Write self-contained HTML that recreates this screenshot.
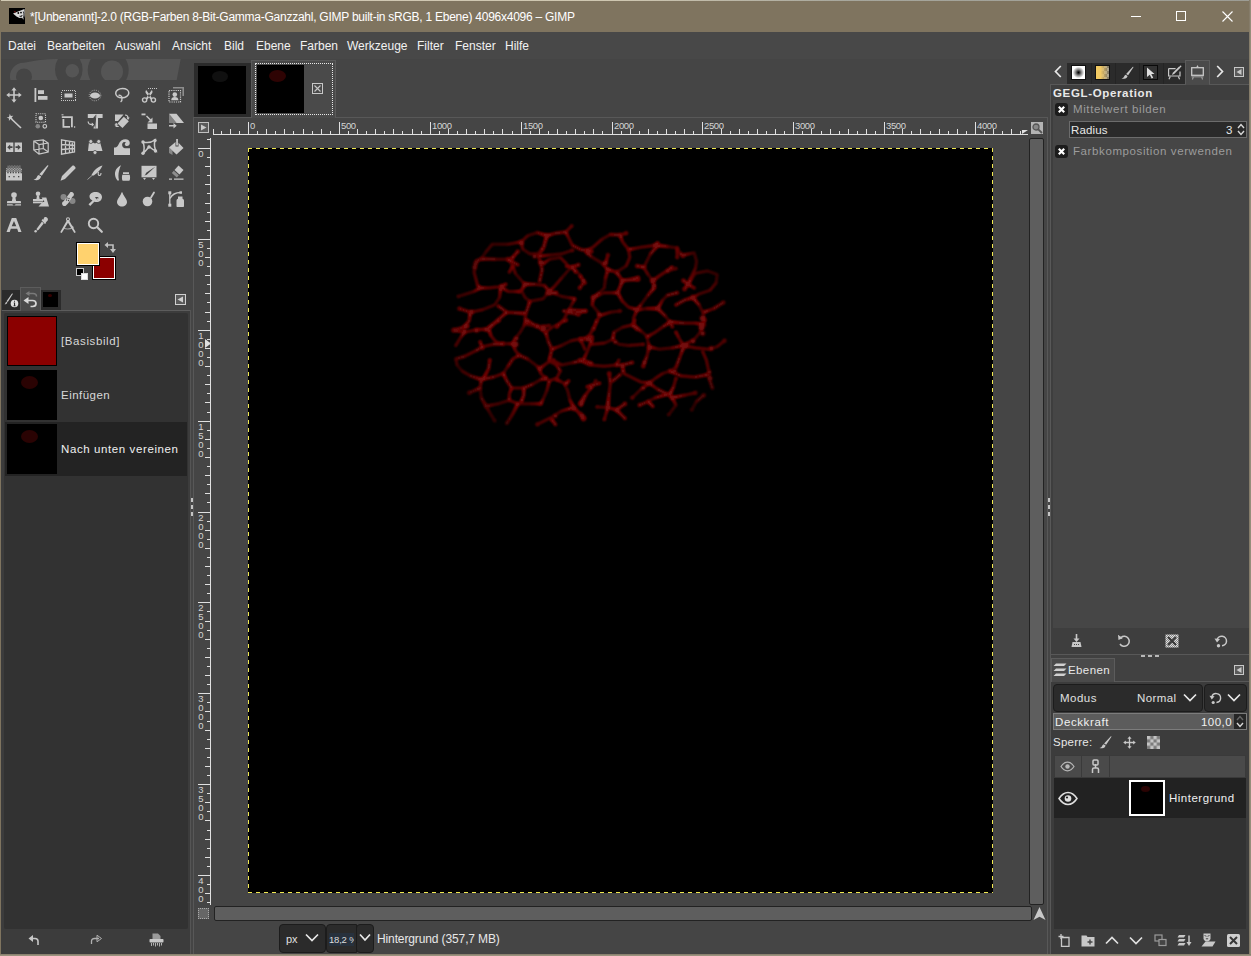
<!DOCTYPE html>
<html>
<head>
<meta charset="utf-8">
<title>GIMP</title>
<style>
*{box-sizing:border-box;margin:0;padding:0}
html,body{width:1251px;height:956px;overflow:hidden;background:#454545;font-family:"Liberation Sans",sans-serif;color:#e0e0e0;font-size:12px}
.abs{position:absolute}
#win{position:absolute;left:0;top:0;width:1251px;height:956px;background:#454545;overflow:hidden}
#title{position:absolute;left:0;top:0;width:1251px;height:32px;background:#7f745f}
#title:before{content:"";position:absolute;left:0;top:0;width:1251px;height:1px;background:linear-gradient(90deg,#d2cab4 0,#cec6b0 50%,#a6a69c 68%,#9c9c94 100%)}
#title .t{position:absolute;left:30px;top:10px;font-size:12px;color:#fff;white-space:nowrap;letter-spacing:-.25px}
#bl{position:absolute;left:0;top:0;width:1px;height:956px;background:#7f745f}
#br{position:absolute;left:1249px;top:0;width:2px;height:956px;background:#857c6a;border-right:1px solid #968e7b}
#bb{position:absolute;left:0;top:954px;width:1251px;height:2px;background:#8a8270;border-bottom:1px solid #9a927e}
#menu span{position:absolute;top:39px;font-size:12px;color:#f2f2f2;white-space:nowrap}
.txt{position:absolute;white-space:nowrap}
.ui{font-size:11.5px;letter-spacing:.6px}
.rt{position:absolute;font-size:9.500px;letter-spacing:-.4px;color:#d4d4d4;line-height:10px;white-space:nowrap}
.vrt{position:absolute;font-size:9.500px;color:#d4d4d4;line-height:9.100px;width:6px;text-align:center}
.dis{color:#9c9c9c}
.cb{width:13px;height:13px;background:#1c1c1c;border-radius:3px}
.ic{position:absolute;width:16px;height:16px;fill:#c8c8c8;stroke:none;overflow:visible}
.ic .s{fill:none;stroke:#c8c8c8}
</style>
</head>
<body>
<div id="win">
<!-- TITLE -->
<div id="title"><svg class="abs" style="left:9px;top:8px" width="16" height="16" viewBox="0 0 16 16"><rect width="16" height="16" fill="#000"/><path d="M4 5.500L9 3.500 15.500 1 15.800 7 14.500 11.500 12.500 9.800 10.500 10 7.500 8.500z" fill="#d8d8d8"/><path d="M4.500 2.800l2.500.5-1 2z" fill="#5a1010"/><circle cx="9.300" cy="5" r=".9" fill="#000"/><circle cx="12" cy="4.600" r=".9" fill="#000"/><path d="M10.500 8.200l2 .2.600-1.400" stroke="#000" stroke-width=".9" fill="none"/><path d="M14.300 3.500c1 2 1 5-.5 7.500" stroke="#000" stroke-width=".8" fill="none"/></svg><span class="t">*[Unbenannt]-2.0 (RGB-Farben 8-Bit-Gamma-Ganzzahl, GIMP built-in sRGB, 1 Ebene) 4096x4096 – GIMP</span><svg class="abs" style="left:1125px;top:5px" width="115" height="22" viewBox="1125 5 115 22"><path d="M1131 16.500h10" stroke="#fff" stroke-width="1"/><rect x="1176.500" y="11.500" width="9" height="9" fill="none" stroke="#fff" stroke-width="1"/><path d="M1222.500 11.500l10 10M1232.500 11.500l-10 10" stroke="#fff" stroke-width="1.100"/></svg></div>
<!-- MENU -->
<div class="abs" style="left:1px;top:32px;width:1248px;height:27px;background:#484848"></div>
<div id="menu">
<span style="left:8px">Datei</span><span style="left:47px">Bearbeiten</span><span style="left:115px">Auswahl</span><span style="left:172px">Ansicht</span><span style="left:224px">Bild</span><span style="left:256px">Ebene</span><span style="left:300px">Farben</span><span style="left:347px">Werkzeuge</span><span style="left:417px">Filter</span><span style="left:455px">Fenster</span><span style="left:505px">Hilfe</span>
</div>
<div id="toolbox">
<!-- wilber strip -->
<svg class="abs" style="left:0;top:59px" width="190" height="21" viewBox="0 59 190 21">
<path d="M10.400 80A13.600 13.600 0 0 1 24 62.800C35 60.500 45 59 56 59L180.700 59 176.700 80z" fill="#555"/>
<circle cx="24" cy="76.400" r="8" fill="#454545"/>
<ellipse cx="68.800" cy="69.500" rx="13.800" ry="17" fill="#454545"/>
<circle cx="72.300" cy="70.800" r="6.800" fill="#555"/>
<circle cx="108.200" cy="70" r="20.500" fill="#454545"/>
<circle cx="112" cy="71.500" r="11" fill="#555"/>
</svg>
<!-- Row 1 -->
<svg class="ic" style="left:6px;top:87px" viewBox="0 0 16 16"><path d="M8 .3l2.6 3.2H8.8v3.7h3.7V5.4L15.7 8l-3.2 2.6V8.8H8.8v3.7h1.8L8 15.7l-2.6-3.2h1.8V8.8H3.500v1.800L.300 8l3.200-2.600v1.800h3.700V3.500H5.400z"/></svg>
<svg class="ic" style="left:33px;top:87px" viewBox="0 0 16 16"><rect x="1.500" y="1" width="1.800" height="14"/><rect x="5" y="3.200" width="6" height="3.800"/><rect x="5" y="9" width="9.500" height="3.800"/></svg>
<svg class="ic" style="left:60px;top:87px" viewBox="0 0 16 16"><rect class="s" x="1.500" y="3.500" width="14" height="10" stroke-width="1" stroke-dasharray="1 1" shape-rendering="crispEdges"/><rect x="4.500" y="6.500" width="8" height="4"/></svg>
<svg class="ic" style="left:87px;top:87px" viewBox="0 0 16 16"><ellipse class="s" cx="8" cy="8.500" rx="5.800" ry="5.300" stroke-width="1" stroke-dasharray="1 1.200" opacity=".75"/><ellipse cx="8" cy="8.500" rx="5" ry="3"/></svg>
<svg class="ic" style="left:114px;top:87px" viewBox="0 0 16 16"><path class="s" stroke-width="1.500" d="M8.500 1.500c3.800 0 6.300 2 6.300 4.500s-3 4.700-6.800 4.700c-3.500 0-6.300-1.700-6.300-4.400 0-2.700 3-4.800 6.800-4.800z"/><path class="s" stroke-width="1.400" d="M4.500 8.500c1.800-.6 3.300.5 3.500 2.200.2 1.600.3 3.200-1.400 4.300"/></svg>
<svg class="ic" style="left:141px;top:87px" viewBox="0 0 16 16"><path class="s" stroke-width="1" stroke-dasharray="1 1" shape-rendering="crispEdges" d="M7 1.500h9"/><circle class="s" cx="3.600" cy="13" r="2.100" stroke-width="1.400"/><circle class="s" cx="12.400" cy="13" r="2.100" stroke-width="1.400"/><path d="M4.700 11.500L10.800 3c.8 1 .9 2.200.3 3.200L6.400 12.400zM11.300 11.500L5.200 3c-.8 1-.9 2.200-.3 3.200l4.700 6.200z"/></svg>
<svg class="ic" style="left:168px;top:87px" viewBox="0 0 16 16"><path d="M5 0h11v9h-1.600V1.600H5z" opacity=".55"/><rect class="s" x="1" y="3.500" width="11.500" height="11.500" stroke-width="1.200" stroke-dasharray="1.200 1"/><circle cx="6.800" cy="7.600" r="2.300"/><path d="M3.200 13.300c0-2.400 1.400-3.300 3.600-3.300s3.600.9 3.600 3.300z"/></svg>
<!-- Row 2 -->
<svg class="ic" style="left:6px;top:113px" viewBox="0 0 16 16"><path d="M3.800.8l1 2.300 2.500-.4-1.600 1.900 1.300 2.200-2.400-.8L2.900 8l.1-2.500L.6 4.600l2.400-.7z"/><path class="s" stroke-width="1.700" d="M5.500 6l9.500 9"/></svg>
<svg class="ic" style="left:33px;top:113px" viewBox="0 0 16 16"><rect class="s" x="3" y=".8" width="9.500" height="8.400" stroke-width="1.100" stroke-dasharray="1.100 1"/><circle cx="7.800" cy="5" r="2.300"/><circle cx="4.800" cy="13.300" r="2.300" opacity=".5"/><circle class="s" cx="11.800" cy="13.300" r="1.800" stroke-width="1.200"/></svg>
<svg class="ic" style="left:60px;top:113px" viewBox="0 0 16 16"><path d="M1.500 1h2v1.500h-2zM14 13h1.200v2H14z" opacity=".7"/><path d="M1.800 3.200h11v11h-1.800V5H1.800z"/><path d="M2.500 6h1.800v7H10v1.800H2.500z"/></svg>
<svg class="ic" style="left:87px;top:113px" viewBox="0 0 16 16"><path d="M.8 1h14.800v4H11v10.500H6.500L9 1.500 6.200 5H.8z"/><path class="s" stroke-width="1.300" d="M1.200 8.500c0 2.500 1 3 4.300 3"/><path d="M4.800 9.500l2.500 2-2.500 2z"/><path d="M9.400 1l-2.900 9.500 1.800 5z" fill="#454545"/></svg>
<svg class="ic" style="left:114px;top:113px" viewBox="0 0 16 16"><path d="M1 1.500h8.500L4 8H1z"/><path d="M3.500 10.500l6.300-6.800 5 4.600-6.300 6.800z"/><path class="s" stroke-width="1.200" d="M11 2c2 0 3 1 3 3"/><path d="M12.500 4.500h3.200L14 7z"/><path class="s" stroke-width="1.200" d="M2.200 10v3.500h2.500M.8 11.800h3"/></svg>
<svg class="ic" style="left:141px;top:113px" viewBox="0 0 16 16"><rect x=".5" y=".5" width="4" height="1.800"/><path class="s" stroke-width="1.400" d="M5.500 3l5 5"/><path d="M11.500 4.500v5h-5z"/><rect x="6.500" y="10.500" width="9.500" height="5.500"/></svg>
<svg class="ic" style="left:168px;top:113px" viewBox="0 0 16 16"><path d="M1 .8h7.500L16 10H8.500z"/><path d="M1 .8L8.500 10H1z" opacity=".45"/><path d="M1 12h4.500v-2l3.200 2.800-3.200 2.800v-2H1z"/></svg>
<!-- Row 3 -->
<svg class="ic" style="left:6px;top:139px" viewBox="0 0 16 16"><path d="M0 3.500h7.300v9.500H0zM8.700 3.500H16v9.500H8.700z"/><path fill="#454545" d="M1.200 8.200l3-2.700v1.800h2.300v1.800H4.200v1.800zM14.800 8.200l-3-2.700v1.800H9.500v1.800h2.300v1.800z"/></svg>
<svg class="ic" style="left:33px;top:139px" viewBox="0 0 16 16"><path class="s" stroke-width="1.200" d="M.8 2l9.500-1.200L15.200 4v9L6 15.200.8 11zM.8 2L6 5.500l9.200-1.500M6 5.500v9.700M10.300.8v8.700l4.900 3.500M10.300 9.500L.8 11"/></svg>
<svg class="ic" style="left:60px;top:139px" viewBox="0 0 16 16"><path class="s" stroke-width="1.300" d="M1.500.8L14.500 3v10L1.500 15.200zM5.500 1.500v13M9.500 2.200v11.600M12.300 2.700v10.600M1.500 5.500l13 1M1.500 10.500l13-1"/></svg>
<svg class="ic" style="left:87px;top:139px" viewBox="0 0 16 16"><path d="M2 3h3l3 1.500L11 3h2l2.500 9H10l-2 1.500L6 12H1z"/><circle cx="3.800" cy="2.500" r="2" stroke="#454545" stroke-width=".8"/><circle cx="11.700" cy="2.500" r="2" stroke="#454545" stroke-width=".8"/><circle cx="8" cy="13.500" r="2" stroke="#454545" stroke-width=".8"/></svg>
<svg class="ic" style="left:114px;top:139px" viewBox="0 0 16 16"><path d="M0 16V8.500c2 0 3.500-.5 4.500-3C5.800 2 8.500.3 11.500.3c2.500 0 4.300 1.500 4.300 3.800 0 2-1.300 3-2.800 3-1.300 0-2.200-.8-2.200-1.900 0-.9.600-1.500 1.400-1.500-.4-.6-1-.8-1.700-.8-1.800 0-2.800 2-2.200 4 .5 1.500 1.800 2.300 3.700 2.300h4V16z"/></svg>
<svg class="ic" style="left:141px;top:139px" viewBox="0 0 16 16"><path class="s" stroke-width="1.500" d="M2 3c3.500 1 8.500.5 12-2-1 4-.5 8 1 11-2.500-1-4.500-2.300-7-4.500C6.500 10 4.500 12 2 14.500 3.500 11 3.500 7 2 3z"/><circle cx="2" cy="3" r="1.700"/><circle cx="14" cy="1.500" r="1.700"/><circle cx="14.500" cy="12" r="1.700"/><circle cx="2" cy="14.300" r="1.700"/><circle cx="8" cy="8" r="1.700"/></svg>
<svg class="ic" style="left:168px;top:139px" viewBox="0 0 16 16"><path d="M8.200 0h1.700v6.500H8.200z"/><path d="M1 8.500L7.500 3v4.500h3V3.800L15.500 9 8.500 15.500z"/><path d="M1 8.500l3.500 3.300V16L1 14z" opacity=".5"/></svg>
<!-- Row 4 -->
<svg class="ic" style="left:6px;top:165px" viewBox="0 0 16 16"><defs><pattern id="chk" width="2.660" height="2.660" patternUnits="userSpaceOnUse"><rect width="1.330" height="1.330" fill="#c8c8c8"/><rect x="1.330" y="1.330" width="1.330" height="1.330" fill="#c8c8c8"/></pattern></defs><rect x="1.300" y="0.500" width="13.400" height="3" fill="url(#chk)" opacity=".6"/><rect x="0" y="3.200" width="16" height="5" fill="url(#chk)"/><path d="M0 7h16v8.500H0z"/><g fill="#454545"><rect x="1.300" y="7" width="1.300" height="1.300"/><rect x="4" y="7" width="1.300" height="1.300"/><rect x="6.600" y="7" width="1.300" height="1.300"/><rect x="9.300" y="7" width="1.300" height="1.300"/><rect x="12" y="7" width="1.300" height="1.300"/><rect x="14.600" y="7" width="1.300" height="1.300"/><rect x="2.600" y="11" width="1.300" height="1.300"/><rect x="7.300" y="11" width="1.300" height="1.300"/><rect x="12" y="11" width="1.300" height="1.300"/></g></svg>
<svg class="ic" style="left:33px;top:165px" viewBox="0 0 16 16"><path d="M15 .3c.3 0 .5.300.3.600L8.800 10.800 6.300 9.300 14.300.600c.2-.2.400-.3.700-.3z"/><path d="M5.700 10.100l2.400 1.500c-.4 1.800-1.800 3.400-4.200 3.600-1.200.1-2.300-.2-3.400-.5 1.800-.5 2.800-1.200 3.300-2.500.3-.900 1-1.700 1.900-2.100z"/></svg>
<svg class="ic" style="left:60px;top:165px" viewBox="0 0 16 16"><path d="M12.300.8c.5-.5 1.300-.5 1.800 0l1.100 1.100c.5.500.5 1.300 0 1.800L5 13.900l-4.500 1.800L2 11z"/></svg>
<svg class="ic" style="left:87px;top:165px" viewBox="0 0 16 16"><path d="M15.500.5C11 1.500 7 5 4.500 10l1.300.8C9 9.500 13.500 5.500 15.500.5z"/><path class="s" stroke-width=".7" d="M5 10.500L.5 14.500"/><path class="s" stroke-width="1.100" d="M11.500 7c-.5 1.500-.5 3.500 1 3.500 1.200 0 1.500-1.200 1.500-2.500"/></svg>
<svg class="ic" style="left:114px;top:165px" viewBox="0 0 16 16"><path d="M7 .2C3 2 .8 5.500 1 9.500c.1 2.500 1.300 4.800 2.800 6.300l1.200-.5C4.200 12.500 4.300 9 5 6c.4-2 1.100-4 2-5.800z"/><path d="M9 7.300h6v1.800H9zM8.300 9.800h7.400c.5 1.800.5 3.800 0 5.500-.1.300-.3.500-.6.500H8.900c-.3 0-.5-.2-.6-.5-.5-1.700-.5-3.700 0-5.500z"/></svg>
<svg class="ic" style="left:141px;top:165px" viewBox="0 0 16 16"><path d="M.5.800h15v11.500H.5z"/><path fill="#454545" d="M14.500 1.500L6 9.500c-.8.800-2 .8-2.800.5 1 0 1.300-.5 1.500-1.300.1-.5.400-.9.800-1.100z"/><path d="M2 13h3l-1.500 2zM11 13h3l-1.500 2z"/></svg>
<svg class="ic" style="left:168px;top:165px" viewBox="0 0 16 16"><path d="M10.500.5L15.500 5l-4 4.500L6.500 5z"/><path d="M5.800 5.800l5 4.500-2 2.200-5-4.500z" opacity=".55"/><path d="M1 13.500h3v1.200H1zM6 13.500h9.500v1.200H6z"/></svg>
<!-- Row 5 -->
<svg class="ic" style="left:6px;top:191px" viewBox="0 0 16 16"><circle cx="8" cy="4" r="2.800"/><path d="M6.800 5.500h2.400l.9 4.500H14c.6 0 1 .4 1 1v3.500H1V11c0-.6.400-1 1-1h3.900z"/><path fill="#454545" d="M1 12.300h14v.9H1zM6.300 13.200h3.400L8 15z"/></svg>
<svg class="ic" style="left:33px;top:191px" viewBox="0 0 16 16"><circle cx="5" cy="2.800" r="2.300"/><path d="M4 4.500h2l.6 3.500H10v2.500H0V8h3.400z"/><path d="M0 11h9v1.300H0z"/><path d="M8.500 6.500h4.800L16 15.500H5.500L9.500 11h2z"/></svg>
<svg class="ic" style="left:60px;top:191px" viewBox="0 0 16 16"><circle cx="3.500" cy="6" r="3" opacity=".5"/><circle cx="12.500" cy="10" r="3" opacity=".5"/><path d="M9.500.8c1.200-.7 2.700-.3 3.400.9.700 1.200.3 2.700-.9 3.400 0 0-2.500 7-5.500 10.100-1.200.7-2.700.3-3.400-.9-.7-1.200-.3-2.700.9-3.400z" transform="rotate(8 8 8)"/><g fill="#454545"><circle cx="7" cy="7" r=".7"/><circle cx="9" cy="7.500" r=".7"/><circle cx="6.500" cy="9" r=".7"/><circle cx="8.500" cy="9.500" r=".7"/></g></svg>
<svg class="ic" style="left:87px;top:191px" viewBox="0 0 16 16"><path d="M8.500 1C12 1 15 3 15 6s-2.500 5-5.500 5c-.8 0-1.500-.1-2.200-.3L3.200 15 1.500 13.300 5.500 9.500C3.800 8.800 2.500 7.500 2.500 5.500 2.500 3 5 1 8.500 1z"/><path fill="#454545" d="M8 6.500c1.500-.8 3.300-.3 4 1-1-.5-2-.3-2.800.4.800.3 1.300 1 1.300 2C10 8.500 9 7.500 8 6.500z"/></svg>
<svg class="ic" style="left:114px;top:191px" viewBox="0 0 16 16"><path d="M8 1c.3 0 .6 1.500 2.300 4.300C12 8 13 9.300 13 11c0 2.500-2.200 4.500-5 4.500S3 13.500 3 11c0-1.700 1-3 2.700-5.700C7.400 2.500 7.700 1 8 1z"/></svg>
<svg class="ic" style="left:141px;top:191px" viewBox="0 0 16 16"><circle cx="6.500" cy="10.500" r="4.800"/><path class="s" stroke-width="1.800" stroke-linecap="round" d="M10 6.500L13 1.500"/></svg>
<svg class="ic" style="left:168px;top:191px" viewBox="0 0 16 16"><path class="s" stroke-width="1.300" d="M1.800 2v12"/><rect x=".3" y=".3" width="3" height="3"/><rect x=".3" y="12.700" width="3" height="3"/><path class="s" stroke-width="1.300" d="M2 7.500C4 3.500 8 1.500 12.500 1.500"/><rect x="11.500" y=".3" width="2.500" height="2.500"/><path d="M10 5.500h4.500v2.300c.9.300 1.500 1 1.500 2V15c0 .6-.4 1-1 1h-5.500c-.6 0-1-.4-1-1V9.800c0-1 .6-1.700 1.500-2z"/></svg>
<!-- Row 6 -->
<svg class="ic" style="left:6px;top:217px" viewBox="0 0 16 16"><path d="M5.800 1h4.400L15.500 15h-3.200l-1.100-3.200H4.800L3.700 15H.5zM8 4L5.700 9.300h4.600z"/></svg>
<svg class="ic" style="left:33px;top:217px" viewBox="0 0 16 16"><path d="M11.200.6c1-.8 2.400-.6 3.200.3.800 1 .7 2.300-.2 3.200l-1.500 1.300.5.600-1.300 1.100-3.400-3.900 1.300-1.100.5.600z"/><path d="M9 4.600l1.700 2-5.200 6.300-1.900.6.300-2z"/><circle cx="2.600" cy="14.300" r="1.200"/></svg>
<svg class="ic" style="left:60px;top:217px" viewBox="0 0 16 16"><circle class="s" cx="8" cy="2.200" r="1.500" stroke-width="1.100"/><path d="M7 3.300h2L15.800 15.300l-1.500.7L8 5.800 1.700 16 .2 15.300z"/><path class="s" stroke-width="1.100" d="M3.200 10.800c3 1.600 6.500 1.600 9.600-.2" opacity=".75"/><path d="M11.300 7.700l2.700 2.600-1.200 1z" opacity=".8"/></svg>
<svg class="ic" style="left:87px;top:217px" viewBox="0 0 16 16"><circle class="s" cx="6.500" cy="6.500" r="4.700" stroke-width="1.900"/><path class="s" stroke-width="2.200" stroke-linecap="round" d="M10.300 10.300l4.500 4.500"/></svg>
<!-- fg/bg -->
<div class="abs" style="left:93px;top:257px;width:22px;height:22px;background:#8b0000;border:1px solid #fff;outline:1px solid #000"></div>
<div class="abs" style="left:77px;top:243px;width:22px;height:22px;background:#ffd26e;border:1px solid #fff;outline:1px solid #000"></div>
<svg class="abs" style="left:104px;top:241px" width="13" height="13" viewBox="0 0 13 13"><path d="M3 4h6v5" fill="none" stroke="#c0c0c0" stroke-width="1.600"/><path d="M4 1L.5 4 4 7zM6 8h6L9 12z" fill="#c0c0c0"/></svg>
<div class="abs" style="left:76px;top:268px;width:8px;height:8px;background:#000;border:1px solid #ccc"></div>
<div class="abs" style="left:81px;top:273px;width:7px;height:7px;background:#fff;border:1px solid #ddd"></div>
</div>
<div id="leftdock">
<!-- tabs -->
<div class="abs" style="left:2px;top:290px;width:59px;height:21px;background:#2b2b2b"></div>
<div class="abs" style="left:20px;top:287px;width:21px;height:25px;background:#4a4a4a;border:1px solid #5c5c5c;border-bottom:none"></div>
<svg class="abs" style="left:4px;top:293px" width="15" height="15" viewBox="0 0 15 15"><path d="M8.500.5c.3 0 .5.300.3.600L3.800 9 2.500 8.300 7.800.800c.2-.2.400-.3.700-.3z" fill="#c8c8c8"/><path d="M2.200 8.800l1.200.7c-.3 1-1.200 1.800-2.900 1.800.8-.5 1-1 1.100-1.500.1-.4.300-.8.600-1z" fill="#c8c8c8"/><circle cx="10.500" cy="10.500" r="3.800" fill="#e0e0e0"/><path d="M10 7.800h1v1h-1zM9.700 9.500h1.400v3h.6v.7H9.400v-.7h.6V10.200h-.3z" fill="#2b2b2b"/></svg>
<svg class="abs" style="left:23px;top:291px" width="16" height="17" viewBox="0 0 16 17"><path d="M4.500 2.500H10c2.200 0 3.500 1.300 3.500 3" fill="none" stroke="#7a7a7a" stroke-width="1.500"/><path d="M6.500 0L2.500 2.500l4 2.500z" fill="#7a7a7a"/><path d="M3 9.500h6.500c2.200 0 3.500 1.200 3.500 3s-1.300 3-3.500 3H7.500" fill="none" stroke="#d8d8d8" stroke-width="1.700"/><path d="M5.500 6L.5 9.500l5 3.500z" fill="#d8d8d8"/></svg>
<div class="abs" style="left:43px;top:292px;width:15px;height:15px;background:#000"></div>
<div class="abs" style="left:48px;top:294px;width:4px;height:3px;border-radius:50%;background:#380000"></div>
<svg class="abs" style="left:175px;top:294px" width="11" height="11" viewBox="0 0 11 11"><rect x=".5" y=".5" width="10" height="10" fill="#5a5a5a" stroke="#d0d0d0"/><path d="M8 2.500L2.500 5.500 8 8.500z" fill="#d0d0d0"/></svg>
<!-- frame -->
<div class="abs" style="left:2px;top:310px;width:189px;height:1px;background:#5c5c5c"></div>
<div class="abs" style="left:21px;top:310px;width:19px;height:1px;background:#4a4a4a"></div>
<!-- list -->
<div class="abs" style="left:1px;top:311px;width:189px;height:643px;background:#3c3c3c"></div>
<div class="abs" style="left:4px;top:313px;width:184px;height:616px;background:#323232;border-radius:2px"></div>
<div class="abs" style="left:5px;top:422px;width:182px;height:54px;background:#232323"></div>
<div class="abs" style="left:7px;top:316px;width:50px;height:50px;background:#8b0000;border:1px solid #000"></div>
<div class="abs" style="left:7px;top:370px;width:50px;height:50px;background:#000"></div>
<div class="abs" style="left:21px;top:376px;width:17px;height:13px;border-radius:50%;background:#2a0303"></div>
<div class="abs" style="left:7px;top:424px;width:50px;height:50px;background:#000"></div>
<div class="abs" style="left:21px;top:430px;width:17px;height:13px;border-radius:50%;background:#2a0303"></div>
<div class="txt ui" style="left:61px;top:335px;color:#d8d8d8" id="u1">[Basisbild]</div>
<div class="txt ui" style="left:61px;top:389px;color:#d8d8d8;letter-spacing:.48px" id="u2">Einfügen</div>
<div class="txt ui" style="left:61px;top:443px;color:#f0f0f0" id="u3">Nach unten vereinen</div>
<!-- bottom buttons -->
<svg class="abs" style="left:28px;top:934px" width="12" height="12" viewBox="0 0 12 12"><path d="M2.500 4.500H7c2 0 3 1 3 2.700V11" fill="none" stroke="#c8c8c8" stroke-width="1.600"/><path d="M5 1L.5 4.500 5 8z" fill="#c8c8c8"/></svg>
<svg class="abs" style="left:89px;top:934px" width="13" height="12" viewBox="0 0 13 12"><path d="M10 4.500H5.500c-2 0-3 1-3 2.700V10" fill="none" stroke="#b0b0b0" stroke-width="1.300"/><path d="M8 1.200l4.500 3.300L8 7.800z" fill="none" stroke="#b0b0b0" stroke-width="1"/></svg>
<svg class="abs" style="left:149px;top:933px" width="15" height="14" viewBox="0 0 15 14"><path d="M3.500.5h5.500l2.500 2.500V6H3.500z" fill="#9a9a9a"/><rect x=".5" y="6" width="14" height="3.500" rx=".8" fill="#c8c8c8"/><path d="M2.500 10v3M4.500 10v2.500M6.500 10v3.500M8.500 10v2.500M10.500 10v3.500M12.500 10v2.500" stroke="#b0b0b0" stroke-width="1"/></svg>
</div>
<div id="center">
<div class="abs" style="left:190px;top:310px;width:1px;height:644px;background:#555"></div>
<div class="abs" style="left:193px;top:117px;width:1px;height:837px;background:#585858"></div>
<div class="abs" style="left:191px;top:498px;width:2px;height:18px;background-image:repeating-linear-gradient(#c4c4c4 0 4px,transparent 4px 7px)"></div>
<div class="abs" style="left:194px;top:63px;width:57px;height:54px;background:#2b2b2b"></div>
<div class="abs" style="left:198px;top:66px;width:48px;height:48px;background:#000"></div>
<div class="abs" style="left:212px;top:71px;width:16px;height:11px;border-radius:50%;background:#101010"></div>
<div class="abs" style="left:251px;top:60px;width:85px;height:58px;background:#4a4a4a;border:1px solid #5a5a5a;border-bottom:none"></div>
<div class="abs" style="left:257px;top:65px;width:47px;height:48px;background:#000"></div>
<div class="abs" style="left:269px;top:70px;width:17px;height:12px;border-radius:50%;background:#2e0303"></div>
<div class="abs" style="left:255px;top:63px;width:78px;height:52px;border:1px dotted #e8e8e8"></div>
<svg class="abs" style="left:312px;top:83px" width="11" height="11" viewBox="0 0 11 11"><rect x=".5" y=".5" width="10" height="10" fill="none" stroke="#c8c8c8"/><path d="M2.500 2.500l6 6M8.500 2.500l-6 6" stroke="#c8c8c8" stroke-width="1.100"/></svg>
<div class="abs" style="left:194px;top:117px;width:57px;height:1px;background:#585858"></div>
<div class="abs" style="left:336px;top:117px;width:712px;height:1px;background:#585858"></div>
<div class="abs" style="left:1047px;top:117px;width:1px;height:837px;background:#585858"></div>
<div class="abs" style="left:1050px;top:84px;width:1px;height:870px;background:#585858"></div>
<div class="abs" style="left:1048px;top:498px;width:2px;height:18px;background-image:repeating-linear-gradient(#c4c4c4 0 4px,transparent 4px 7px)"></div>
<svg class="abs" style="left:198px;top:122px" width="11" height="11" viewBox="0 0 11 11"><rect x=".5" y=".5" width="10" height="10" fill="#5a5a5a" stroke="#c0c0c0"/><path d="M3 2.500L8.500 5.500 3 8.500z" fill="#c8c8c8"/></svg>
<svg class="abs" style="left:213px;top:119px" width="818" height="17" viewBox="0 0 818 17" shape-rendering="crispEdges"><rect x="1" y="15" width="814" height="1" fill="#e0e0e0"/><rect x="8" y="12" width="1" height="3" fill="#e0e0e0"/><rect x="17" y="10" width="1" height="5" fill="#e0e0e0"/><rect x="26" y="12" width="1" height="3" fill="#e0e0e0"/><rect x="35" y="3" width="1" height="12" fill="#e0e0e0"/><rect x="44" y="12" width="1" height="3" fill="#e0e0e0"/><rect x="53" y="10" width="1" height="5" fill="#e0e0e0"/><rect x="62" y="12" width="1" height="3" fill="#e0e0e0"/><rect x="71" y="10" width="1" height="5" fill="#e0e0e0"/><rect x="80" y="12" width="1" height="3" fill="#e0e0e0"/><rect x="90" y="10" width="1" height="5" fill="#e0e0e0"/><rect x="99" y="12" width="1" height="3" fill="#e0e0e0"/><rect x="108" y="10" width="1" height="5" fill="#e0e0e0"/><rect x="117" y="12" width="1" height="3" fill="#e0e0e0"/><rect x="126" y="3" width="1" height="12" fill="#e0e0e0"/><rect x="135" y="12" width="1" height="3" fill="#e0e0e0"/><rect x="144" y="10" width="1" height="5" fill="#e0e0e0"/><rect x="153" y="12" width="1" height="3" fill="#e0e0e0"/><rect x="162" y="10" width="1" height="5" fill="#e0e0e0"/><rect x="171" y="12" width="1" height="3" fill="#e0e0e0"/><rect x="180" y="10" width="1" height="5" fill="#e0e0e0"/><rect x="189" y="12" width="1" height="3" fill="#e0e0e0"/><rect x="199" y="10" width="1" height="5" fill="#e0e0e0"/><rect x="208" y="12" width="1" height="3" fill="#e0e0e0"/><rect x="217" y="3" width="1" height="12" fill="#e0e0e0"/><rect x="226" y="12" width="1" height="3" fill="#e0e0e0"/><rect x="235" y="10" width="1" height="5" fill="#e0e0e0"/><rect x="244" y="12" width="1" height="3" fill="#e0e0e0"/><rect x="253" y="10" width="1" height="5" fill="#e0e0e0"/><rect x="262" y="12" width="1" height="3" fill="#e0e0e0"/><rect x="271" y="10" width="1" height="5" fill="#e0e0e0"/><rect x="280" y="12" width="1" height="3" fill="#e0e0e0"/><rect x="289" y="10" width="1" height="5" fill="#e0e0e0"/><rect x="299" y="12" width="1" height="3" fill="#e0e0e0"/><rect x="308" y="3" width="1" height="12" fill="#e0e0e0"/><rect x="317" y="12" width="1" height="3" fill="#e0e0e0"/><rect x="326" y="10" width="1" height="5" fill="#e0e0e0"/><rect x="335" y="12" width="1" height="3" fill="#e0e0e0"/><rect x="344" y="10" width="1" height="5" fill="#e0e0e0"/><rect x="353" y="12" width="1" height="3" fill="#e0e0e0"/><rect x="362" y="10" width="1" height="5" fill="#e0e0e0"/><rect x="371" y="12" width="1" height="3" fill="#e0e0e0"/><rect x="380" y="10" width="1" height="5" fill="#e0e0e0"/><rect x="389" y="12" width="1" height="3" fill="#e0e0e0"/><rect x="399" y="3" width="1" height="12" fill="#e0e0e0"/><rect x="408" y="12" width="1" height="3" fill="#e0e0e0"/><rect x="417" y="10" width="1" height="5" fill="#e0e0e0"/><rect x="426" y="12" width="1" height="3" fill="#e0e0e0"/><rect x="435" y="10" width="1" height="5" fill="#e0e0e0"/><rect x="444" y="12" width="1" height="3" fill="#e0e0e0"/><rect x="453" y="10" width="1" height="5" fill="#e0e0e0"/><rect x="462" y="12" width="1" height="3" fill="#e0e0e0"/><rect x="471" y="10" width="1" height="5" fill="#e0e0e0"/><rect x="480" y="12" width="1" height="3" fill="#e0e0e0"/><rect x="489" y="3" width="1" height="12" fill="#e0e0e0"/><rect x="498" y="12" width="1" height="3" fill="#e0e0e0"/><rect x="508" y="10" width="1" height="5" fill="#e0e0e0"/><rect x="517" y="12" width="1" height="3" fill="#e0e0e0"/><rect x="526" y="10" width="1" height="5" fill="#e0e0e0"/><rect x="535" y="12" width="1" height="3" fill="#e0e0e0"/><rect x="544" y="10" width="1" height="5" fill="#e0e0e0"/><rect x="553" y="12" width="1" height="3" fill="#e0e0e0"/><rect x="562" y="10" width="1" height="5" fill="#e0e0e0"/><rect x="571" y="12" width="1" height="3" fill="#e0e0e0"/><rect x="580" y="3" width="1" height="12" fill="#e0e0e0"/><rect x="589" y="12" width="1" height="3" fill="#e0e0e0"/><rect x="598" y="10" width="1" height="5" fill="#e0e0e0"/><rect x="608" y="12" width="1" height="3" fill="#e0e0e0"/><rect x="617" y="10" width="1" height="5" fill="#e0e0e0"/><rect x="626" y="12" width="1" height="3" fill="#e0e0e0"/><rect x="635" y="10" width="1" height="5" fill="#e0e0e0"/><rect x="644" y="12" width="1" height="3" fill="#e0e0e0"/><rect x="653" y="10" width="1" height="5" fill="#e0e0e0"/><rect x="662" y="12" width="1" height="3" fill="#e0e0e0"/><rect x="671" y="3" width="1" height="12" fill="#e0e0e0"/><rect x="680" y="12" width="1" height="3" fill="#e0e0e0"/><rect x="689" y="10" width="1" height="5" fill="#e0e0e0"/><rect x="698" y="12" width="1" height="3" fill="#e0e0e0"/><rect x="707" y="10" width="1" height="5" fill="#e0e0e0"/><rect x="717" y="12" width="1" height="3" fill="#e0e0e0"/><rect x="726" y="10" width="1" height="5" fill="#e0e0e0"/><rect x="735" y="12" width="1" height="3" fill="#e0e0e0"/><rect x="744" y="10" width="1" height="5" fill="#e0e0e0"/><rect x="753" y="12" width="1" height="3" fill="#e0e0e0"/><rect x="762" y="3" width="1" height="12" fill="#e0e0e0"/><rect x="771" y="12" width="1" height="3" fill="#e0e0e0"/><rect x="780" y="10" width="1" height="5" fill="#e0e0e0"/><rect x="789" y="12" width="1" height="3" fill="#e0e0e0"/><rect x="798" y="10" width="1" height="5" fill="#e0e0e0"/><rect x="807" y="12" width="1" height="3" fill="#e0e0e0"/><rect x="0" y="10" width="1" height="6" fill="#e0e0e0"/><path d="M809 15V11h6z" fill="#e0e0e0" shape-rendering="auto"/></svg>
<div class="rt" style="left:250px;top:121px">0</div>
<div class="rt" style="left:341px;top:121px">500</div>
<div class="rt" style="left:432px;top:121px">1000</div>
<div class="rt" style="left:523px;top:121px">1500</div>
<div class="rt" style="left:614px;top:121px">2000</div>
<div class="rt" style="left:704px;top:121px">2500</div>
<div class="rt" style="left:795px;top:121px">3000</div>
<div class="rt" style="left:886px;top:121px">3500</div>
<div class="rt" style="left:977px;top:121px">4000</div>
<svg class="abs" style="left:196px;top:136px" width="17" height="772" viewBox="0 0 17 772" shape-rendering="crispEdges"><rect x="14" y="2" width="1" height="767" fill="#e0e0e0"/><rect x="11" y="3" width="3" height="1" fill="#e0e0e0"/><rect x="2" y="12" width="12" height="1" fill="#e0e0e0"/><rect x="11" y="21" width="3" height="1" fill="#e0e0e0"/><rect x="9" y="30" width="5" height="1" fill="#e0e0e0"/><rect x="11" y="39" width="3" height="1" fill="#e0e0e0"/><rect x="9" y="48" width="5" height="1" fill="#e0e0e0"/><rect x="11" y="57" width="3" height="1" fill="#e0e0e0"/><rect x="9" y="67" width="5" height="1" fill="#e0e0e0"/><rect x="11" y="76" width="3" height="1" fill="#e0e0e0"/><rect x="9" y="85" width="5" height="1" fill="#e0e0e0"/><rect x="11" y="94" width="3" height="1" fill="#e0e0e0"/><rect x="2" y="103" width="12" height="1" fill="#e0e0e0"/><rect x="11" y="112" width="3" height="1" fill="#e0e0e0"/><rect x="9" y="121" width="5" height="1" fill="#e0e0e0"/><rect x="11" y="130" width="3" height="1" fill="#e0e0e0"/><rect x="9" y="139" width="5" height="1" fill="#e0e0e0"/><rect x="11" y="148" width="3" height="1" fill="#e0e0e0"/><rect x="9" y="157" width="5" height="1" fill="#e0e0e0"/><rect x="11" y="166" width="3" height="1" fill="#e0e0e0"/><rect x="9" y="176" width="5" height="1" fill="#e0e0e0"/><rect x="11" y="185" width="3" height="1" fill="#e0e0e0"/><rect x="2" y="194" width="12" height="1" fill="#e0e0e0"/><rect x="11" y="203" width="3" height="1" fill="#e0e0e0"/><rect x="9" y="212" width="5" height="1" fill="#e0e0e0"/><rect x="11" y="221" width="3" height="1" fill="#e0e0e0"/><rect x="9" y="230" width="5" height="1" fill="#e0e0e0"/><rect x="11" y="239" width="3" height="1" fill="#e0e0e0"/><rect x="9" y="248" width="5" height="1" fill="#e0e0e0"/><rect x="11" y="257" width="3" height="1" fill="#e0e0e0"/><rect x="9" y="266" width="5" height="1" fill="#e0e0e0"/><rect x="11" y="276" width="3" height="1" fill="#e0e0e0"/><rect x="2" y="285" width="12" height="1" fill="#e0e0e0"/><rect x="11" y="294" width="3" height="1" fill="#e0e0e0"/><rect x="9" y="303" width="5" height="1" fill="#e0e0e0"/><rect x="11" y="312" width="3" height="1" fill="#e0e0e0"/><rect x="9" y="321" width="5" height="1" fill="#e0e0e0"/><rect x="11" y="330" width="3" height="1" fill="#e0e0e0"/><rect x="9" y="339" width="5" height="1" fill="#e0e0e0"/><rect x="11" y="348" width="3" height="1" fill="#e0e0e0"/><rect x="9" y="357" width="5" height="1" fill="#e0e0e0"/><rect x="11" y="366" width="3" height="1" fill="#e0e0e0"/><rect x="2" y="376" width="12" height="1" fill="#e0e0e0"/><rect x="11" y="385" width="3" height="1" fill="#e0e0e0"/><rect x="9" y="394" width="5" height="1" fill="#e0e0e0"/><rect x="11" y="403" width="3" height="1" fill="#e0e0e0"/><rect x="9" y="412" width="5" height="1" fill="#e0e0e0"/><rect x="11" y="421" width="3" height="1" fill="#e0e0e0"/><rect x="9" y="430" width="5" height="1" fill="#e0e0e0"/><rect x="11" y="439" width="3" height="1" fill="#e0e0e0"/><rect x="9" y="448" width="5" height="1" fill="#e0e0e0"/><rect x="11" y="457" width="3" height="1" fill="#e0e0e0"/><rect x="2" y="466" width="12" height="1" fill="#e0e0e0"/><rect x="11" y="475" width="3" height="1" fill="#e0e0e0"/><rect x="9" y="485" width="5" height="1" fill="#e0e0e0"/><rect x="11" y="494" width="3" height="1" fill="#e0e0e0"/><rect x="9" y="503" width="5" height="1" fill="#e0e0e0"/><rect x="11" y="512" width="3" height="1" fill="#e0e0e0"/><rect x="9" y="521" width="5" height="1" fill="#e0e0e0"/><rect x="11" y="530" width="3" height="1" fill="#e0e0e0"/><rect x="9" y="539" width="5" height="1" fill="#e0e0e0"/><rect x="11" y="548" width="3" height="1" fill="#e0e0e0"/><rect x="2" y="557" width="12" height="1" fill="#e0e0e0"/><rect x="11" y="566" width="3" height="1" fill="#e0e0e0"/><rect x="9" y="575" width="5" height="1" fill="#e0e0e0"/><rect x="11" y="585" width="3" height="1" fill="#e0e0e0"/><rect x="9" y="594" width="5" height="1" fill="#e0e0e0"/><rect x="11" y="603" width="3" height="1" fill="#e0e0e0"/><rect x="9" y="612" width="5" height="1" fill="#e0e0e0"/><rect x="11" y="621" width="3" height="1" fill="#e0e0e0"/><rect x="9" y="630" width="5" height="1" fill="#e0e0e0"/><rect x="11" y="639" width="3" height="1" fill="#e0e0e0"/><rect x="2" y="648" width="12" height="1" fill="#e0e0e0"/><rect x="11" y="657" width="3" height="1" fill="#e0e0e0"/><rect x="9" y="666" width="5" height="1" fill="#e0e0e0"/><rect x="11" y="675" width="3" height="1" fill="#e0e0e0"/><rect x="9" y="684" width="5" height="1" fill="#e0e0e0"/><rect x="11" y="694" width="3" height="1" fill="#e0e0e0"/><rect x="9" y="703" width="5" height="1" fill="#e0e0e0"/><rect x="11" y="712" width="3" height="1" fill="#e0e0e0"/><rect x="9" y="721" width="5" height="1" fill="#e0e0e0"/><rect x="11" y="730" width="3" height="1" fill="#e0e0e0"/><rect x="2" y="739" width="12" height="1" fill="#e0e0e0"/><rect x="11" y="748" width="3" height="1" fill="#e0e0e0"/><rect x="9" y="757" width="5" height="1" fill="#e0e0e0"/><rect x="11" y="766" width="3" height="1" fill="#e0e0e0"/></svg>
<div class="abs" style="left:196px;top:136px;width:14px;height:769px;overflow:hidden">
<div class="vrt" style="left:2px;top:13px">0</div>
<div class="vrt" style="left:2px;top:104px">5<br>0<br>0</div>
<div class="vrt" style="left:2px;top:195px">1<br>0<br>0<br>0</div>
<div class="vrt" style="left:2px;top:286px">1<br>5<br>0<br>0</div>
<div class="vrt" style="left:2px;top:377px">2<br>0<br>0<br>0</div>
<div class="vrt" style="left:2px;top:467px">2<br>5<br>0<br>0</div>
<div class="vrt" style="left:2px;top:558px">3<br>0<br>0<br>0</div>
<div class="vrt" style="left:2px;top:649px">3<br>5<br>0<br>0</div>
<div class="vrt" style="left:2px;top:740px">4<br>0<br>0<br>0</div>
</div>
<svg class="abs" style="left:205px;top:339px" width="6" height="9" viewBox="0 0 6 9"><path d="M0 0l6 4.500L0 9z" fill="#e0e0e0"/></svg>
<div class="abs" id="canvas" style="left:248px;top:148px;width:745px;height:745px;background:#000;overflow:hidden"><svg class="abs" style="left:0;top:0" width="746" height="746" viewBox="0 0 746 746"><defs><filter id="bl1" filterUnits="userSpaceOnUse" x="180" y="60" width="320" height="240"><feGaussianBlur stdDeviation="1.3"/></filter><filter id="bl2" filterUnits="userSpaceOnUse" x="180" y="60" width="320" height="240"><feGaussianBlur stdDeviation=".9"/></filter><radialGradient id="wg" gradientUnits="userSpaceOnUse" cx="342" cy="177" r="168" gradientTransform="translate(0 39) scale(1 .78)"><stop offset="0" stop-color="#fff"/><stop offset=".75" stop-color="#fff"/><stop offset="1" stop-color="#5a5a5a"/></radialGradient><mask id="wm" maskUnits="userSpaceOnUse" x="150" y="40" width="400" height="280"><rect x="150" y="40" width="400" height="280" fill="url(#wg)"/></mask></defs><g fill="none" stroke-linecap="round" stroke-linejoin="round" mask="url(#wm)"><path d="M323.8 77.9 L317.8 84.0 L307.4 85.2 L298.9 87.7 M317.8 84.0 L324.4 97.4 L332.9 101.6 L344.0 103.5 M298.9 87.7 L289.2 84.6 L279.5 87.7 L273.4 93.7 L274.6 101.0 L281.9 105.9 L289.2 105.9 L295.3 99.8 L298.9 87.7 M298.9 87.7 L296.5 98.6 L290.4 108.3 L292.8 115.6 L294.1 121.7 L291.6 133.2 M273.4 93.7 L260.0 96.2 L244.2 96.2 L238.2 103.5 L233.3 110.7 L228.5 113.2 M228.5 113.2 L226.0 124.1 L229.7 137.5 L232.1 139.9 M233.3 110.7 L246.7 111.3 L260.0 111.3 L264.9 118.0 L267.3 125.3 L274.6 133.8 L277.1 136.3 M269.8 103.5 L263.7 110.7 M260.0 111.3 L269.8 116.8 M264.9 118.0 L261.3 124.1 M290.4 108.3 L301.4 107.1 L313.5 105.9 L324.4 102.2 M295.3 115.6 L301.4 111.3 L312.3 109.5 L318.4 115.6 L322.0 120.5 L313.5 130.2 L306.2 138.7 L301.4 143.5 M318.4 118.0 L324.4 119.2 L332.9 127.8 L335.4 135.0 L331.7 139.9 M324.4 119.2 L330.5 116.8 M324.4 119.2 L328.1 124.1 M277.1 136.3 L286.8 136.3 L296.5 137.5 L301.4 143.5 M277.1 136.3 L273.4 142.3 L277.1 149.6 L281.9 153.3 L295.3 150.8 L298.9 146.0 L301.4 143.5 M301.4 143.5 L313.5 148.4 L326.9 150.8 M298.9 144.8 L308.6 144.8 M232.1 139.9 L240.6 139.9 L252.8 138.7 L257.6 136.3 M232.1 139.9 L226.0 143.5 L210.2 148.4 M252.8 138.7 L260.0 143.5 L272.2 143.5 M252.8 139.9 L251.5 149.6 L246.7 156.9 L234.5 161.8 L222.4 164.2 L211.4 160.6 M222.4 164.2 L221.2 172.7 L216.3 178.8 M250.3 158.1 L258.8 164.2 L277.1 165.4 M281.9 153.3 L278.3 164.2 L277.1 170.3 L279.5 176.4 L289.2 178.8 L301.4 177.6 M258.8 164.2 L250.3 171.5 L240.6 180.0 M326.9 150.8 L320.8 161.8 L315.9 171.5 L308.6 178.8 M320.8 161.8 L337.8 163.0 M315.9 163.0 L330.5 166.6 M338.1 102.8 L344.2 99.8 L353.9 91.3 L362.4 86.4 L372.1 87.0 L378.2 85.2 M372.1 87.0 L374.5 93.7 L380.6 101.6 L381.8 109.5 L378.2 118.0 L368.5 124.1 L359.9 121.7 M338.1 102.8 L342.9 108.3 L352.7 114.4 L359.9 121.7 M359.9 107.1 L357.5 115.6 M380.6 101.6 L392.8 99.2 L407.3 97.4 L409.8 94.9 M409.8 97.4 L402.5 105.9 L397.6 115.6 L396.4 120.5 L400.0 126.5 L404.9 132.6 L406.1 139.9 M389.1 118.0 L396.4 119.2 M409.8 97.4 L419.5 98.6 L429.2 99.8 L432.8 105.9 L435.3 108.3 M429.2 99.8 L429.2 109.5 M435.3 107.1 L446.2 104.7 L448.6 113.2 L447.4 120.5 L442.6 130.2 L440.1 136.3 M404.9 132.6 L417.1 124.1 L428.0 120.5 M404.9 132.6 L411.0 127.8 L424.3 119.2 M359.9 121.7 L357.5 130.2 L356.3 139.9 L351.4 144.8 L345.4 149.6 M368.5 124.1 L374.5 132.6 L390.3 131.4 M374.5 132.6 L369.7 144.8 M374.5 132.6 L390.3 129.6 M345.4 149.6 L356.3 144.8 L369.7 144.8 M369.7 144.8 L374.5 153.3 L380.6 159.3 L389.1 161.8 M406.1 139.9 L400.0 147.2 L392.8 156.9 L389.1 161.8 M389.1 161.8 L398.8 160.6 L409.8 160.6 M409.8 160.6 L414.6 152.1 L419.5 147.2 L429.2 144.8 M409.8 160.6 L417.1 167.8 L421.9 173.9 L424.3 178.8 M389.1 161.8 L385.5 170.3 L386.7 176.4 L389.1 181.0 M345.4 149.6 L344.2 156.9 L350.2 164.2 L351.4 167.8 L347.8 176.4 L345.4 181.0 M351.4 167.8 L362.4 164.2 L372.1 163.0 M332.0 164.2 L338.1 163.0 M332.0 127.8 L336.9 135.0 M440.1 136.3 L447.4 125.3 L459.6 122.9 L469.3 126.5 L468.1 135.0 L462.0 142.3 L451.1 146.0 L445.0 149.6 M445.0 149.6 L436.5 152.1 L428.0 156.9 M445.0 149.6 L451.1 156.9 L454.7 164.2 L455.9 170.3 L453.5 181.0 M455.9 164.2 L465.7 160.6 L475.4 154.5 M440.1 136.3 L436.5 141.1 M440.1 136.3 L446.2 139.9 M440.1 136.3 L435.3 132.6 M421.9 173.9 L435.3 175.1 L447.4 175.1 L453.5 176.4 M205.4 182.3 L216.3 184.2 L228.5 181.7 L240.6 181.1 L246.7 175.6 L251.5 172.0 M216.3 184.2 L211.4 191.4 L207.8 197.5 M205.4 182.3 L219.9 178.1 M240.6 181.1 L243.0 187.8 L247.9 193.9 L255.2 195.7 L264.9 195.7 M264.9 195.7 L267.3 190.2 L272.2 184.2 L275.8 178.1 L278.3 172.0 M264.9 195.7 L267.3 202.4 L271.0 207.2 L279.5 210.9 L289.2 218.2 L291.6 220.6 M271.0 207.2 L264.9 210.9 L260.0 218.2 L255.2 225.5 L245.5 229.1 L233.3 231.5 M233.3 231.5 L222.4 227.9 L213.9 223.0 L209.0 217.0 L207.8 210.9 L216.3 208.5 L228.5 202.4 L234.5 198.7 L245.5 196.3 L255.2 195.7 M232.1 193.9 L234.5 199.9 M241.8 212.1 L240.6 220.6 L235.7 230.3 M233.3 231.5 L232.1 240.0 L233.3 249.8 L238.2 258.3 M232.1 240.0 L221.2 244.9 M238.2 258.3 L243.0 266.8 L246.7 272.8 M238.2 258.3 L250.3 255.8 L261.3 252.2 L269.8 255.8 L283.1 255.8 L292.8 255.8 M255.2 225.5 L258.8 232.8 L263.7 240.0 L275.8 240.0 L284.3 236.4 L292.8 231.5 L297.7 230.3 M263.7 240.0 L261.3 246.1 L261.3 252.2 M275.8 240.0 L275.8 247.3 L273.4 253.4 M269.8 255.8 L264.9 265.6 L258.8 275.3 M291.6 220.6 L292.8 225.5 L297.7 230.3 L301.4 232.8 L308.6 230.3 L312.3 223.0 L308.6 217.0 L301.4 213.3 L291.6 220.6 M297.7 184.2 L300.1 192.7 L303.8 201.2 L301.4 212.1 M278.3 172.0 L284.3 175.6 L292.8 180.5 L297.7 184.2 L303.8 179.3 L313.5 174.4 L318.4 172.0 M303.8 201.2 L313.5 197.5 L323.2 192.7 L332.9 190.8 L344.0 189.0 M305.0 212.1 L313.5 217.0 L325.7 214.5 L335.4 212.1 L344.0 215.7 M335.4 212.1 L340.2 201.2 L344.0 191.4 M301.4 232.8 L298.9 242.5 L295.3 251.0 L292.8 255.8 M308.6 231.5 L315.9 235.2 L319.6 242.5 L322.0 252.2 L325.7 259.5 M320.8 232.8 L317.1 236.4 M325.7 259.5 L313.5 263.1 L301.4 270.4 L289.2 276.5 M303.8 271.6 L307.4 276.5 M325.7 259.5 L331.7 265.6 L336.6 270.4 M344.0 237.6 L337.8 247.3 L332.9 257.1 M349.0 172.0 L345.4 180.5 L340.5 189.0 L332.0 192.7 M340.5 189.0 L344.2 196.3 L356.3 195.1 L364.8 191.4 L370.9 196.3 L380.6 197.5 L395.2 196.3 M364.8 191.4 L366.0 184.2 L374.5 179.3 L384.2 176.9 L386.7 172.0 M384.2 176.9 L392.8 182.9 L398.8 187.8 L400.0 193.9 L401.3 198.7 M398.8 189.0 L407.3 184.2 L415.8 178.1 L421.9 174.4 M401.3 198.7 L411.0 201.2 L424.3 199.9 L435.3 197.5 M401.3 198.7 L398.8 208.5 L395.2 218.2 M435.3 197.5 L430.4 189.0 L428.0 184.2 M435.3 197.5 L446.2 191.4 L452.3 184.2 L454.7 175.6 L457.1 172.0 M435.3 197.5 L447.4 199.9 L460.8 201.2 L469.3 198.7 L476.6 192.7 M454.7 203.6 L458.4 212.1 L460.8 223.0 L462.0 232.8 L464.4 240.0 M435.3 199.9 L431.6 209.7 L428.0 219.4 L421.9 223.0 L414.6 225.5 L407.3 230.3 L401.3 235.2 M421.9 223.0 L432.8 227.9 L447.4 229.1 L459.6 226.7 M332.0 212.1 L341.7 217.0 L356.3 218.2 L368.5 217.0 L374.5 217.0 L384.2 214.5 M368.5 217.0 L370.9 212.1 M374.5 217.0 L375.7 225.5 L383.0 229.1 L392.8 234.0 L401.3 235.2 M401.3 235.2 L392.8 241.3 L384.2 249.8 M401.3 235.2 L409.8 241.3 L419.5 246.1 L424.3 249.8 M428.0 230.3 L425.6 238.8 L421.9 246.1 M424.3 249.8 L436.5 247.3 L447.4 244.9 M424.3 249.8 L428.0 257.1 L420.7 266.8 M419.5 246.1 L407.3 249.8 L397.6 254.6 L391.5 257.1 M400.0 253.4 L404.9 258.3 M455.9 247.3 L448.6 253.4 L443.8 261.9 M361.2 225.5 L362.4 235.2 L361.2 244.9 L359.9 257.1 M372.1 226.7 L364.8 232.8 M349.0 258.9 L359.9 259.5 L368.5 261.9 M359.9 259.5 L356.3 271.6 M368.5 261.9 L377.0 270.4 M368.5 261.9 L377.0 255.8 M347.8 232.8 L342.9 240.0 L336.9 247.3 L332.0 255.8 M339.3 238.8 L351.4 235.2 M332.0 265.6 L335.6 271.6 M332.0 190.2 L336.9 201.2" stroke="#300303" stroke-width="2.6" filter="url(#bl1)"/><g fill="#520606" filter="url(#bl1)"><circle cx="323.8" cy="77.9" r="1.4"/><circle cx="298.9" cy="87.7" r="1.2"/><circle cx="317.8" cy="84.0" r="1.4"/><circle cx="344.0" cy="103.5" r="1.1"/><circle cx="298.9" cy="87.7" r="1.1"/><circle cx="298.9" cy="87.7" r="1.1"/><circle cx="298.9" cy="87.7" r="2.2"/><circle cx="291.6" cy="133.2" r="1.1"/><circle cx="273.4" cy="93.7" r="2.0"/><circle cx="228.5" cy="113.2" r="1.2"/><circle cx="228.5" cy="113.2" r="1.1"/><circle cx="232.1" cy="139.9" r="1.2"/><circle cx="233.3" cy="110.7" r="1.7"/><circle cx="277.1" cy="136.3" r="1.5"/><circle cx="269.8" cy="103.5" r="2.1"/><circle cx="263.7" cy="110.7" r="1.9"/><circle cx="260.0" cy="111.3" r="2.2"/><circle cx="269.8" cy="116.8" r="1.1"/><circle cx="264.9" cy="118.0" r="1.9"/><circle cx="261.3" cy="124.1" r="1.2"/><circle cx="290.4" cy="108.3" r="1.0"/><circle cx="324.4" cy="102.2" r="1.8"/><circle cx="295.3" cy="115.6" r="1.4"/><circle cx="301.4" cy="143.5" r="1.8"/><circle cx="318.4" cy="118.0" r="1.1"/><circle cx="331.7" cy="139.9" r="1.8"/><circle cx="324.4" cy="119.2" r="1.5"/><circle cx="330.5" cy="116.8" r="1.8"/><circle cx="324.4" cy="119.2" r="1.6"/><circle cx="328.1" cy="124.1" r="1.2"/><circle cx="277.1" cy="136.3" r="1.1"/><circle cx="301.4" cy="143.5" r="1.9"/><circle cx="277.1" cy="136.3" r="2.0"/><circle cx="301.4" cy="143.5" r="1.1"/><circle cx="301.4" cy="143.5" r="1.5"/><circle cx="326.9" cy="150.8" r="1.4"/><circle cx="298.9" cy="144.8" r="1.2"/><circle cx="308.6" cy="144.8" r="1.2"/><circle cx="232.1" cy="139.9" r="1.3"/><circle cx="257.6" cy="136.3" r="1.6"/><circle cx="232.1" cy="139.9" r="1.5"/><circle cx="210.2" cy="148.4" r="1.4"/><circle cx="252.8" cy="138.7" r="1.8"/><circle cx="272.2" cy="143.5" r="1.6"/><circle cx="252.8" cy="139.9" r="1.1"/><circle cx="211.4" cy="160.6" r="2.1"/><circle cx="222.4" cy="164.2" r="1.1"/><circle cx="216.3" cy="178.8" r="1.8"/><circle cx="250.3" cy="158.1" r="1.3"/><circle cx="277.1" cy="165.4" r="1.2"/><circle cx="281.9" cy="153.3" r="1.0"/><circle cx="301.4" cy="177.6" r="1.2"/><circle cx="258.8" cy="164.2" r="1.2"/><circle cx="240.6" cy="180.0" r="1.3"/><circle cx="326.9" cy="150.8" r="1.1"/><circle cx="308.6" cy="178.8" r="2.0"/><circle cx="320.8" cy="161.8" r="1.1"/><circle cx="337.8" cy="163.0" r="1.1"/><circle cx="315.9" cy="163.0" r="1.3"/><circle cx="330.5" cy="166.6" r="2.0"/><circle cx="338.1" cy="102.8" r="1.0"/><circle cx="378.2" cy="85.2" r="2.1"/><circle cx="372.1" cy="87.0" r="2.2"/><circle cx="359.9" cy="121.7" r="2.0"/><circle cx="338.1" cy="102.8" r="1.9"/><circle cx="359.9" cy="121.7" r="1.4"/><circle cx="359.9" cy="107.1" r="2.0"/><circle cx="357.5" cy="115.6" r="2.0"/><circle cx="380.6" cy="101.6" r="1.9"/><circle cx="409.8" cy="94.9" r="1.3"/><circle cx="409.8" cy="97.4" r="1.0"/><circle cx="406.1" cy="139.9" r="1.3"/><circle cx="389.1" cy="118.0" r="2.1"/><circle cx="396.4" cy="119.2" r="1.4"/><circle cx="409.8" cy="97.4" r="1.3"/><circle cx="435.3" cy="108.3" r="1.2"/><circle cx="429.2" cy="99.8" r="1.6"/><circle cx="429.2" cy="109.5" r="1.8"/><circle cx="435.3" cy="107.1" r="1.1"/><circle cx="440.1" cy="136.3" r="1.8"/><circle cx="404.9" cy="132.6" r="1.9"/><circle cx="428.0" cy="120.5" r="1.4"/><circle cx="404.9" cy="132.6" r="1.5"/><circle cx="424.3" cy="119.2" r="1.5"/><circle cx="359.9" cy="121.7" r="1.2"/><circle cx="345.4" cy="149.6" r="1.2"/><circle cx="368.5" cy="124.1" r="2.0"/><circle cx="390.3" cy="131.4" r="2.2"/><circle cx="374.5" cy="132.6" r="1.7"/><circle cx="369.7" cy="144.8" r="1.2"/><circle cx="374.5" cy="132.6" r="2.2"/><circle cx="390.3" cy="129.6" r="1.8"/><circle cx="345.4" cy="149.6" r="2.1"/><circle cx="369.7" cy="144.8" r="1.5"/><circle cx="369.7" cy="144.8" r="1.3"/><circle cx="389.1" cy="161.8" r="1.3"/><circle cx="406.1" cy="139.9" r="1.3"/><circle cx="389.1" cy="161.8" r="1.5"/><circle cx="389.1" cy="161.8" r="1.5"/><circle cx="409.8" cy="160.6" r="1.7"/><circle cx="409.8" cy="160.6" r="2.1"/><circle cx="429.2" cy="144.8" r="1.6"/><circle cx="409.8" cy="160.6" r="1.5"/><circle cx="424.3" cy="178.8" r="1.2"/><circle cx="389.1" cy="161.8" r="1.6"/><circle cx="389.1" cy="181.0" r="1.9"/><circle cx="345.4" cy="149.6" r="1.7"/><circle cx="345.4" cy="181.0" r="1.9"/><circle cx="351.4" cy="167.8" r="1.6"/><circle cx="372.1" cy="163.0" r="1.7"/><circle cx="332.0" cy="164.2" r="1.5"/><circle cx="338.1" cy="163.0" r="1.7"/><circle cx="332.0" cy="127.8" r="1.6"/><circle cx="336.9" cy="135.0" r="1.8"/><circle cx="440.1" cy="136.3" r="1.6"/><circle cx="445.0" cy="149.6" r="1.6"/><circle cx="445.0" cy="149.6" r="2.0"/><circle cx="428.0" cy="156.9" r="1.2"/><circle cx="445.0" cy="149.6" r="1.1"/><circle cx="453.5" cy="181.0" r="1.3"/><circle cx="455.9" cy="164.2" r="1.2"/><circle cx="475.4" cy="154.5" r="1.9"/><circle cx="440.1" cy="136.3" r="2.1"/><circle cx="436.5" cy="141.1" r="2.2"/><circle cx="440.1" cy="136.3" r="2.1"/><circle cx="446.2" cy="139.9" r="1.5"/><circle cx="440.1" cy="136.3" r="2.2"/><circle cx="435.3" cy="132.6" r="2.0"/><circle cx="421.9" cy="173.9" r="1.5"/><circle cx="453.5" cy="176.4" r="1.6"/><circle cx="205.4" cy="182.3" r="1.9"/><circle cx="251.5" cy="172.0" r="1.0"/><circle cx="216.3" cy="184.2" r="1.6"/><circle cx="207.8" cy="197.5" r="1.1"/><circle cx="205.4" cy="182.3" r="2.2"/><circle cx="219.9" cy="178.1" r="1.1"/><circle cx="240.6" cy="181.1" r="1.0"/><circle cx="264.9" cy="195.7" r="1.9"/><circle cx="264.9" cy="195.7" r="2.0"/><circle cx="278.3" cy="172.0" r="1.3"/><circle cx="264.9" cy="195.7" r="1.1"/><circle cx="291.6" cy="220.6" r="1.1"/><circle cx="271.0" cy="207.2" r="2.0"/><circle cx="233.3" cy="231.5" r="1.1"/><circle cx="233.3" cy="231.5" r="1.7"/><circle cx="255.2" cy="195.7" r="2.1"/><circle cx="232.1" cy="193.9" r="1.4"/><circle cx="234.5" cy="199.9" r="1.9"/><circle cx="241.8" cy="212.1" r="1.6"/><circle cx="235.7" cy="230.3" r="1.2"/><circle cx="233.3" cy="231.5" r="1.3"/><circle cx="238.2" cy="258.3" r="1.0"/><circle cx="232.1" cy="240.0" r="1.6"/><circle cx="221.2" cy="244.9" r="2.1"/><circle cx="238.2" cy="258.3" r="2.0"/><circle cx="246.7" cy="272.8" r="1.5"/><circle cx="238.2" cy="258.3" r="1.5"/><circle cx="292.8" cy="255.8" r="1.6"/><circle cx="255.2" cy="225.5" r="1.8"/><circle cx="297.7" cy="230.3" r="1.5"/><circle cx="263.7" cy="240.0" r="1.2"/><circle cx="261.3" cy="252.2" r="1.1"/><circle cx="275.8" cy="240.0" r="1.8"/><circle cx="273.4" cy="253.4" r="1.3"/><circle cx="269.8" cy="255.8" r="1.6"/><circle cx="258.8" cy="275.3" r="1.2"/><circle cx="291.6" cy="220.6" r="2.2"/><circle cx="291.6" cy="220.6" r="2.2"/><circle cx="297.7" cy="184.2" r="1.6"/><circle cx="301.4" cy="212.1" r="1.2"/><circle cx="278.3" cy="172.0" r="1.1"/><circle cx="318.4" cy="172.0" r="1.5"/><circle cx="303.8" cy="201.2" r="1.9"/><circle cx="344.0" cy="189.0" r="1.8"/><circle cx="305.0" cy="212.1" r="2.2"/><circle cx="344.0" cy="215.7" r="1.2"/><circle cx="335.4" cy="212.1" r="2.1"/><circle cx="344.0" cy="191.4" r="1.8"/><circle cx="301.4" cy="232.8" r="1.2"/><circle cx="292.8" cy="255.8" r="1.6"/><circle cx="308.6" cy="231.5" r="2.0"/><circle cx="325.7" cy="259.5" r="1.7"/><circle cx="320.8" cy="232.8" r="1.0"/><circle cx="317.1" cy="236.4" r="1.2"/><circle cx="325.7" cy="259.5" r="1.1"/><circle cx="289.2" cy="276.5" r="2.0"/><circle cx="303.8" cy="271.6" r="1.8"/><circle cx="307.4" cy="276.5" r="1.6"/><circle cx="325.7" cy="259.5" r="2.0"/><circle cx="336.6" cy="270.4" r="1.9"/><circle cx="344.0" cy="237.6" r="1.8"/><circle cx="332.9" cy="257.1" r="1.1"/><circle cx="349.0" cy="172.0" r="1.1"/><circle cx="332.0" cy="192.7" r="1.3"/><circle cx="340.5" cy="189.0" r="2.2"/><circle cx="395.2" cy="196.3" r="1.6"/><circle cx="364.8" cy="191.4" r="1.1"/><circle cx="386.7" cy="172.0" r="1.2"/><circle cx="384.2" cy="176.9" r="1.0"/><circle cx="401.3" cy="198.7" r="1.1"/><circle cx="398.8" cy="189.0" r="1.3"/><circle cx="421.9" cy="174.4" r="1.6"/><circle cx="401.3" cy="198.7" r="2.1"/><circle cx="435.3" cy="197.5" r="1.2"/><circle cx="401.3" cy="198.7" r="1.6"/><circle cx="395.2" cy="218.2" r="2.0"/><circle cx="435.3" cy="197.5" r="1.3"/><circle cx="428.0" cy="184.2" r="1.3"/><circle cx="435.3" cy="197.5" r="1.7"/><circle cx="457.1" cy="172.0" r="1.2"/><circle cx="435.3" cy="197.5" r="1.6"/><circle cx="476.6" cy="192.7" r="2.1"/><circle cx="454.7" cy="203.6" r="1.0"/><circle cx="464.4" cy="240.0" r="1.0"/><circle cx="435.3" cy="199.9" r="1.4"/><circle cx="401.3" cy="235.2" r="1.4"/><circle cx="421.9" cy="223.0" r="1.9"/><circle cx="459.6" cy="226.7" r="2.1"/><circle cx="332.0" cy="212.1" r="2.2"/><circle cx="384.2" cy="214.5" r="1.7"/><circle cx="368.5" cy="217.0" r="2.0"/><circle cx="370.9" cy="212.1" r="1.3"/><circle cx="374.5" cy="217.0" r="1.3"/><circle cx="401.3" cy="235.2" r="1.3"/><circle cx="401.3" cy="235.2" r="2.1"/><circle cx="384.2" cy="249.8" r="2.0"/><circle cx="401.3" cy="235.2" r="2.1"/><circle cx="424.3" cy="249.8" r="1.7"/><circle cx="428.0" cy="230.3" r="1.5"/><circle cx="421.9" cy="246.1" r="1.9"/><circle cx="424.3" cy="249.8" r="1.1"/><circle cx="447.4" cy="244.9" r="2.1"/><circle cx="424.3" cy="249.8" r="1.4"/><circle cx="420.7" cy="266.8" r="1.4"/><circle cx="419.5" cy="246.1" r="1.3"/><circle cx="391.5" cy="257.1" r="1.8"/><circle cx="400.0" cy="253.4" r="1.2"/><circle cx="404.9" cy="258.3" r="1.2"/><circle cx="455.9" cy="247.3" r="2.1"/><circle cx="443.8" cy="261.9" r="1.6"/><circle cx="361.2" cy="225.5" r="2.2"/><circle cx="359.9" cy="257.1" r="1.5"/><circle cx="372.1" cy="226.7" r="1.4"/><circle cx="364.8" cy="232.8" r="1.1"/><circle cx="349.0" cy="258.9" r="1.3"/><circle cx="368.5" cy="261.9" r="1.7"/><circle cx="359.9" cy="259.5" r="1.5"/><circle cx="356.3" cy="271.6" r="1.5"/><circle cx="368.5" cy="261.9" r="1.5"/><circle cx="377.0" cy="270.4" r="1.4"/><circle cx="368.5" cy="261.9" r="1.3"/><circle cx="377.0" cy="255.8" r="2.2"/><circle cx="347.8" cy="232.8" r="1.6"/><circle cx="332.0" cy="255.8" r="1.8"/><circle cx="339.3" cy="238.8" r="1.3"/><circle cx="351.4" cy="235.2" r="1.5"/><circle cx="332.0" cy="265.6" r="2.1"/><circle cx="335.6" cy="271.6" r="2.0"/><circle cx="332.0" cy="190.2" r="1.0"/><circle cx="336.9" cy="201.2" r="1.0"/></g><g stroke="#720707" filter="url(#bl2)"><path d="M289.2 84.6L279.5 87.7M274.6 101.0L281.9 105.9M281.9 105.9L289.2 105.9M289.2 105.9L295.3 99.8M298.9 87.7L296.5 98.6M260.0 96.2L244.2 96.2M238.2 103.5L233.3 110.7M246.7 111.3L260.0 111.3M260.0 111.3L264.9 118.0M267.3 125.3L274.6 133.8M301.4 107.1L313.5 105.9M313.5 105.9L324.4 102.2M301.4 111.3L312.3 109.5M318.4 115.6L322.0 120.5M322.0 120.5L313.5 130.2M324.4 119.2L332.9 127.8M332.9 127.8L335.4 135.0M273.4 142.3L277.1 149.6M277.1 149.6L281.9 153.3M281.9 153.3L295.3 150.8M295.3 150.8L298.9 146.0M301.4 143.5L313.5 148.4M313.5 148.4L326.9 150.8M226.0 143.5L210.2 148.4M251.5 149.6L246.7 156.9M246.7 156.9L234.5 161.8M279.5 176.4L289.2 178.8M326.9 150.8L320.8 161.8M353.9 91.3L362.4 86.4M378.2 118.0L368.5 124.1M342.9 108.3L352.7 114.4M352.7 114.4L359.9 121.7M402.5 105.9L397.6 115.6M397.6 115.6L396.4 120.5M400.0 126.5L404.9 132.6M404.9 132.6L406.1 139.9M419.5 98.6L429.2 99.8M429.2 99.8L432.8 105.9M435.3 107.1L446.2 104.7M446.2 104.7L448.6 113.2M448.6 113.2L447.4 120.5M417.1 124.1L428.0 120.5M404.9 132.6L411.0 127.8M357.5 130.2L356.3 139.9M356.3 139.9L351.4 144.8M345.4 149.6L356.3 144.8M400.0 147.2L392.8 156.9M389.1 161.8L398.8 160.6M414.6 152.1L419.5 147.2M417.1 167.8L421.9 173.9M344.2 156.9L350.2 164.2M362.4 164.2L372.1 163.0M440.1 136.3L447.4 125.3M447.4 125.3L459.6 122.9M459.6 122.9L469.3 126.5M469.3 126.5L468.1 135.0M462.0 142.3L451.1 146.0M451.1 146.0L445.0 149.6M451.1 156.9L454.7 164.2M454.7 164.2L455.9 170.3M455.9 170.3L453.5 181.0M216.3 184.2L211.4 191.4M255.2 195.7L264.9 195.7M267.3 190.2L272.2 184.2M272.2 184.2L275.8 178.1M279.5 210.9L289.2 218.2M271.0 207.2L264.9 210.9M260.0 218.2L255.2 225.5M213.9 223.0L209.0 217.0M232.1 240.0L233.3 249.8M250.3 255.8L261.3 252.2M269.8 255.8L283.1 255.8M284.3 236.4L292.8 231.5M261.3 246.1L261.3 252.2M297.7 230.3L301.4 232.8M303.8 179.3L313.5 174.4M313.5 197.5L323.2 192.7M313.5 217.0L325.7 214.5M298.9 242.5L295.3 251.0M308.6 231.5L315.9 235.2M315.9 235.2L319.6 242.5M319.6 242.5L322.0 252.2M313.5 263.1L301.4 270.4M356.3 195.1L364.8 191.4M364.8 191.4L370.9 196.3M370.9 196.3L380.6 197.5M366.0 184.2L374.5 179.3M392.8 182.9L398.8 187.8M398.8 187.8L400.0 193.9M401.3 198.7L411.0 201.2M411.0 201.2L424.3 199.9M401.3 198.7L398.8 208.5M435.3 197.5L430.4 189.0M446.2 191.4L452.3 184.2M460.8 201.2L469.3 198.7M428.0 219.4L421.9 223.0M421.9 223.0L414.6 225.5M407.3 230.3L401.3 235.2M368.5 217.0L370.9 212.1M392.8 234.0L401.3 235.2M392.8 241.3L384.2 249.8M428.0 257.1L420.7 266.8M407.3 249.8L397.6 254.6M448.6 253.4L443.8 261.9M349.0 258.9L359.9 259.5M347.8 232.8L342.9 240.0M332.0 265.6L335.6 271.6" stroke-width="1.0"/><path d="M323.8 77.9L317.8 84.0M307.4 85.2L298.9 87.7M317.8 84.0L324.4 97.4M279.5 87.7L273.4 93.7M273.4 93.7L274.6 101.0M296.5 98.6L290.4 108.3M290.4 108.3L292.8 115.6M273.4 93.7L260.0 96.2M244.2 96.2L238.2 103.5M228.5 113.2L226.0 124.1M226.0 124.1L229.7 137.5M264.9 118.0L267.3 125.3M274.6 133.8L277.1 136.3M264.9 118.0L261.3 124.1M290.4 108.3L301.4 107.1M295.3 115.6L301.4 111.3M312.3 109.5L318.4 115.6M313.5 130.2L306.2 138.7M306.2 138.7L301.4 143.5M318.4 118.0L324.4 119.2M286.8 136.3L296.5 137.5M232.1 139.9L240.6 139.9M240.6 139.9L252.8 138.7M232.1 139.9L226.0 143.5M252.8 138.7L260.0 143.5M260.0 143.5L272.2 143.5M252.8 139.9L251.5 149.6M234.5 161.8L222.4 164.2M278.3 164.2L277.1 170.3M289.2 178.8L301.4 177.6M320.8 161.8L315.9 171.5M315.9 171.5L308.6 178.8M338.1 102.8L344.2 99.8M344.2 99.8L353.9 91.3M372.1 87.0L378.2 85.2M372.1 87.0L374.5 93.7M374.5 93.7L380.6 101.6M380.6 101.6L381.8 109.5M381.8 109.5L378.2 118.0M368.5 124.1L359.9 121.7M359.9 107.1L357.5 115.6M380.6 101.6L392.8 99.2M392.8 99.2L407.3 97.4M396.4 120.5L400.0 126.5M432.8 105.9L435.3 108.3M429.2 99.8L429.2 109.5M447.4 120.5L442.6 130.2M404.9 132.6L417.1 124.1M411.0 127.8L424.3 119.2M368.5 124.1L374.5 132.6M374.5 132.6L390.3 129.6M356.3 144.8L369.7 144.8M374.5 153.3L380.6 159.3M380.6 159.3L389.1 161.8M409.8 160.6L414.6 152.1M389.1 161.8L385.5 170.3M385.5 170.3L386.7 176.4M386.7 176.4L389.1 181.0M350.2 164.2L351.4 167.8M351.4 167.8L347.8 176.4M347.8 176.4L345.4 181.0M351.4 167.8L362.4 164.2M332.0 164.2L338.1 163.0M332.0 127.8L336.9 135.0M468.1 135.0L462.0 142.3M455.9 164.2L465.7 160.6M440.1 136.3L446.2 139.9M435.3 175.1L447.4 175.1M205.4 182.3L216.3 184.2M216.3 184.2L228.5 181.7M240.6 181.1L246.7 175.6M246.7 175.6L251.5 172.0M211.4 191.4L207.8 197.5M243.0 187.8L247.9 193.9M247.9 193.9L255.2 195.7M275.8 178.1L278.3 172.0M264.9 195.7L267.3 202.4M267.3 202.4L271.0 207.2M289.2 218.2L291.6 220.6M255.2 225.5L245.5 229.1M222.4 227.9L213.9 223.0M209.0 217.0L207.8 210.9M216.3 208.5L228.5 202.4M234.5 198.7L245.5 196.3M233.3 231.5L232.1 240.0M238.2 258.3L243.0 266.8M243.0 266.8L246.7 272.8M238.2 258.3L250.3 255.8M261.3 252.2L269.8 255.8M283.1 255.8L292.8 255.8M263.7 240.0L275.8 240.0M263.7 240.0L261.3 246.1M291.6 220.6L292.8 225.5M292.8 225.5L297.7 230.3M301.4 232.8L308.6 230.3M308.6 230.3L312.3 223.0M308.6 217.0L301.4 213.3M301.4 213.3L291.6 220.6M297.7 184.2L300.1 192.7M292.8 180.5L297.7 184.2M297.7 184.2L303.8 179.3M313.5 174.4L318.4 172.0M303.8 201.2L313.5 197.5M323.2 192.7L332.9 190.8M305.0 212.1L313.5 217.0M335.4 212.1L344.0 215.7M335.4 212.1L340.2 201.2M340.2 201.2L344.0 191.4M301.4 232.8L298.9 242.5M295.3 251.0L292.8 255.8M325.7 259.5L313.5 263.1M301.4 270.4L289.2 276.5M325.7 259.5L331.7 265.6M331.7 265.6L336.6 270.4M344.0 237.6L337.8 247.3M349.0 172.0L345.4 180.5M345.4 180.5L340.5 189.0M340.5 189.0L332.0 192.7M344.2 196.3L356.3 195.1M380.6 197.5L395.2 196.3M374.5 179.3L384.2 176.9M384.2 176.9L386.7 172.0M400.0 193.9L401.3 198.7M398.8 189.0L407.3 184.2M407.3 184.2L415.8 178.1M435.3 197.5L446.2 191.4M452.3 184.2L454.7 175.6M454.7 175.6L457.1 172.0M435.3 197.5L447.4 199.9M447.4 199.9L460.8 201.2M469.3 198.7L476.6 192.7M454.7 203.6L458.4 212.1M458.4 212.1L460.8 223.0M460.8 223.0L462.0 232.8M435.3 199.9L431.6 209.7M414.6 225.5L407.3 230.3M432.8 227.9L447.4 229.1M341.7 217.0L356.3 218.2M356.3 218.2L368.5 217.0M374.5 217.0L375.7 225.5M375.7 225.5L383.0 229.1M383.0 229.1L392.8 234.0M401.3 235.2L392.8 241.3M401.3 235.2L409.8 241.3M419.5 246.1L424.3 249.8M428.0 230.3L425.6 238.8M436.5 247.3L447.4 244.9M424.3 249.8L428.0 257.1M362.4 235.2L361.2 244.9M359.9 259.5L368.5 261.9M359.9 259.5L356.3 271.6M342.9 240.0L336.9 247.3M332.0 190.2L336.9 201.2" stroke-width="1.6"/><path d="M317.8 84.0L307.4 85.2M324.4 97.4L332.9 101.6M332.9 101.6L344.0 103.5M298.9 87.7L289.2 84.6M295.3 99.8L298.9 87.7M292.8 115.6L294.1 121.7M294.1 121.7L291.6 133.2M233.3 110.7L228.5 113.2M229.7 137.5L232.1 139.9M233.3 110.7L246.7 111.3M269.8 103.5L263.7 110.7M260.0 111.3L269.8 116.8M335.4 135.0L331.7 139.9M324.4 119.2L330.5 116.8M324.4 119.2L328.1 124.1M277.1 136.3L286.8 136.3M296.5 137.5L301.4 143.5M277.1 136.3L273.4 142.3M298.9 146.0L301.4 143.5M298.9 144.8L308.6 144.8M252.8 138.7L257.6 136.3M222.4 164.2L211.4 160.6M222.4 164.2L221.2 172.7M221.2 172.7L216.3 178.8M250.3 158.1L258.8 164.2M258.8 164.2L277.1 165.4M281.9 153.3L278.3 164.2M277.1 170.3L279.5 176.4M258.8 164.2L250.3 171.5M250.3 171.5L240.6 180.0M320.8 161.8L337.8 163.0M315.9 163.0L330.5 166.6M362.4 86.4L372.1 87.0M338.1 102.8L342.9 108.3M407.3 97.4L409.8 94.9M409.8 97.4L402.5 105.9M389.1 118.0L396.4 119.2M409.8 97.4L419.5 98.6M442.6 130.2L440.1 136.3M359.9 121.7L357.5 130.2M351.4 144.8L345.4 149.6M374.5 132.6L390.3 131.4M374.5 132.6L369.7 144.8M369.7 144.8L374.5 153.3M406.1 139.9L400.0 147.2M392.8 156.9L389.1 161.8M398.8 160.6L409.8 160.6M419.5 147.2L429.2 144.8M409.8 160.6L417.1 167.8M421.9 173.9L424.3 178.8M345.4 149.6L344.2 156.9M445.0 149.6L436.5 152.1M436.5 152.1L428.0 156.9M445.0 149.6L451.1 156.9M465.7 160.6L475.4 154.5M440.1 136.3L436.5 141.1M440.1 136.3L435.3 132.6M421.9 173.9L435.3 175.1M447.4 175.1L453.5 176.4M228.5 181.7L240.6 181.1M205.4 182.3L219.9 178.1M240.6 181.1L243.0 187.8M264.9 195.7L267.3 190.2M271.0 207.2L279.5 210.9M264.9 210.9L260.0 218.2M245.5 229.1L233.3 231.5M233.3 231.5L222.4 227.9M207.8 210.9L216.3 208.5M228.5 202.4L234.5 198.7M245.5 196.3L255.2 195.7M232.1 193.9L234.5 199.9M241.8 212.1L240.6 220.6M240.6 220.6L235.7 230.3M233.3 249.8L238.2 258.3M232.1 240.0L221.2 244.9M255.2 225.5L258.8 232.8M258.8 232.8L263.7 240.0M275.8 240.0L284.3 236.4M292.8 231.5L297.7 230.3M275.8 240.0L275.8 247.3M275.8 247.3L273.4 253.4M269.8 255.8L264.9 265.6M264.9 265.6L258.8 275.3M312.3 223.0L308.6 217.0M300.1 192.7L303.8 201.2M303.8 201.2L301.4 212.1M278.3 172.0L284.3 175.6M284.3 175.6L292.8 180.5M332.9 190.8L344.0 189.0M325.7 214.5L335.4 212.1M322.0 252.2L325.7 259.5M320.8 232.8L317.1 236.4M303.8 271.6L307.4 276.5M337.8 247.3L332.9 257.1M340.5 189.0L344.2 196.3M364.8 191.4L366.0 184.2M384.2 176.9L392.8 182.9M415.8 178.1L421.9 174.4M424.3 199.9L435.3 197.5M398.8 208.5L395.2 218.2M430.4 189.0L428.0 184.2M462.0 232.8L464.4 240.0M431.6 209.7L428.0 219.4M421.9 223.0L432.8 227.9M447.4 229.1L459.6 226.7M332.0 212.1L341.7 217.0M368.5 217.0L374.5 217.0M374.5 217.0L384.2 214.5M409.8 241.3L419.5 246.1M425.6 238.8L421.9 246.1M424.3 249.8L436.5 247.3M419.5 246.1L407.3 249.8M397.6 254.6L391.5 257.1M400.0 253.4L404.9 258.3M455.9 247.3L448.6 253.4M361.2 225.5L362.4 235.2M361.2 244.9L359.9 257.1M372.1 226.7L364.8 232.8M368.5 261.9L377.0 270.4M368.5 261.9L377.0 255.8M336.9 247.3L332.0 255.8M339.3 238.8L351.4 235.2" stroke-width="2.5"/></g><g fill="#760808" filter="url(#bl2)"><circle cx="273.4" cy="94.9" r="2.5"/><circle cx="226.6" cy="119.2" r="2.2"/><circle cx="227.2" cy="115.6" r="1.9"/><circle cx="254.0" cy="138.7" r="2.4"/><circle cx="301.4" cy="144.8" r="2.7"/><circle cx="292.8" cy="114.4" r="2.5"/><circle cx="324.4" cy="119.2" r="2.2"/><circle cx="335.4" cy="132.6" r="2.0"/><circle cx="340.2" cy="104.7" r="2.5"/><circle cx="322.0" cy="163.0" r="2.5"/><circle cx="223.6" cy="164.2" r="2.4"/><circle cx="286.8" cy="108.3" r="2.2"/><circle cx="329.3" cy="164.2" r="1.9"/><circle cx="294.1" cy="101.0" r="1.7"/><circle cx="339.3" cy="103.5" r="2.2"/><circle cx="356.3" cy="115.6" r="2.4"/><circle cx="407.3" cy="97.4" r="2.5"/><circle cx="404.9" cy="132.6" r="2.9"/><circle cx="406.1" cy="137.5" r="2.2"/><circle cx="440.1" cy="136.3" r="2.2"/><circle cx="445.0" cy="149.6" r="2.5"/><circle cx="345.4" cy="149.6" r="2.4"/><circle cx="351.4" cy="166.6" r="2.2"/><circle cx="389.1" cy="161.8" r="2.2"/><circle cx="421.9" cy="173.9" r="2.2"/><circle cx="454.7" cy="170.3" r="2.9"/><circle cx="455.3" cy="176.4" r="2.5"/><circle cx="374.5" cy="132.6" r="2.0"/><circle cx="419.5" cy="122.9" r="1.9"/><circle cx="432.8" cy="105.9" r="1.7"/><circle cx="216.3" cy="183.5" r="2.4"/><circle cx="228.5" cy="182.3" r="2.4"/><circle cx="238.2" cy="181.5" r="2.2"/><circle cx="267.3" cy="196.3" r="3.1"/><circle cx="268.5" cy="190.2" r="2.0"/><circle cx="295.3" cy="180.5" r="3.1"/><circle cx="289.2" cy="178.1" r="2.2"/><circle cx="233.3" cy="231.5" r="2.0"/><circle cx="297.7" cy="230.3" r="2.2"/><circle cx="325.7" cy="260.7" r="2.2"/><circle cx="334.2" cy="268.0" r="2.4"/><circle cx="269.8" cy="255.8" r="1.9"/><circle cx="318.4" cy="235.2" r="1.9"/><circle cx="307.4" cy="268.0" r="1.9"/><circle cx="437.7" cy="197.5" r="3.1"/><circle cx="445.0" cy="193.3" r="2.2"/><circle cx="453.5" cy="179.3" r="2.9"/><circle cx="454.7" cy="185.4" r="2.4"/><circle cx="463.2" cy="200.6" r="2.4"/><circle cx="401.3" cy="199.9" r="2.4"/><circle cx="401.3" cy="235.2" r="2.5"/><circle cx="395.2" cy="240.0" r="1.9"/><circle cx="424.3" cy="249.8" r="2.4"/><circle cx="462.0" cy="230.3" r="2.4"/><circle cx="461.4" cy="224.2" r="1.9"/><circle cx="359.9" cy="259.5" r="2.4"/><circle cx="374.5" cy="218.2" r="2.2"/><circle cx="375.1" cy="223.0" r="1.9"/><circle cx="339.3" cy="191.4" r="2.2"/><circle cx="396.4" cy="214.5" r="1.9"/><circle cx="334.4" cy="269.2" r="2.2"/><circle cx="367.2" cy="193.9" r="1.9"/><circle cx="342.9" cy="240.0" r="1.7"/><circle cx="426.8" cy="223.0" r="2.0"/><path d="M299.5 89.6L307.0 85.4L298.4 85.7zM316.2 84.8L320.4 89.4L319.3 83.2zM299.4 86.1L289.2 84.6L298.4 89.2zM297.0 87.1L296.0 97.5L300.8 88.2zM296.9 87.2L297.4 94.7L301.0 88.1zM273.2 92.4L266.7 94.9L273.7 95.1zM229.2 114.7L233.3 110.7L227.7 111.6zM226.4 112.7L226.4 122.6L230.5 113.6zM233.4 138.6L229.7 137.5L230.8 141.2zM233.2 112.4L242.1 111.1L233.4 109.1zM278.0 135.3L274.6 133.8L276.1 137.2zM264.8 111.7L269.8 103.5L262.5 109.8zM259.2 112.9L266.6 115.0L260.9 109.8zM263.7 117.3L261.3 124.1L266.1 118.8zM290.6 110.1L299.9 107.3L290.2 106.5zM296.1 116.7L300.5 112.0L294.5 114.5zM302.6 144.8L306.2 138.7L300.1 142.3zM318.0 119.6L324.4 119.2L318.7 116.5zM325.1 120.9L330.1 117.0L323.8 117.6zM323.2 120.2L328.1 124.1L325.7 118.3zM329.7 122.9L324.4 119.2L326.4 125.3zM277.1 138.3L285.4 136.3L277.1 134.2zM302.5 142.6L296.8 137.9L300.2 144.5zM275.3 135.2L273.4 142.3L278.8 137.3zM300.3 142.5L298.9 146.0L302.4 144.6zM300.7 145.1L310.1 147.0L302.0 142.0zM327.2 149.2L319.7 149.5L326.6 152.4zM298.9 146.6L308.6 144.8L298.9 142.9zM308.6 143.3L302.5 144.8L308.6 146.2zM232.1 141.5L240.2 139.9L232.1 138.3zM231.1 138.3L226.1 143.5L233.0 141.5zM251.7 140.3L260.0 143.5L253.8 137.1zM272.2 141.8L265.2 143.5L272.2 145.3zM250.7 139.6L251.8 147.4L254.8 140.2zM220.4 163.9L221.4 171.3L224.3 164.5zM217.5 179.7L221.2 172.7L215.1 177.9zM277.2 163.9L266.3 164.7L276.9 166.9zM280.3 152.7L279.7 159.8L283.5 153.8zM257.9 163.1L252.7 169.5L259.8 165.3zM241.8 181.4L248.7 172.9L239.4 178.6zM325.6 150.1L323.0 157.8L328.1 151.5zM309.7 179.8L315.9 171.5L307.6 177.7zM320.7 163.2L327.0 162.2L320.9 160.4zM337.9 161.6L329.9 162.4L337.7 164.3zM339.0 104.6L344.2 99.8L337.2 101.0zM370.3 87.7L374.5 93.7L373.9 86.4zM359.4 123.6L367.3 123.8L360.5 119.7zM337.0 103.8L342.9 108.3L339.2 101.9zM361.3 120.3L355.6 117.3L358.6 123.0zM359.3 116.1L359.7 108.0L355.8 115.1zM380.9 103.2L388.1 100.1L380.3 100.1zM408.7 93.9L407.3 97.4L410.8 96.0zM408.6 96.4L404.7 103.3L410.9 98.4zM408.2 139.6L405.0 133.4L404.1 140.2zM396.7 117.2L389.5 118.1L396.1 121.3zM409.6 98.9L419.5 98.6L410.0 95.8zM436.7 106.9L432.8 105.9L433.9 109.7zM427.9 99.8L429.2 108.2L430.5 99.8zM435.6 108.7L445.6 104.8L434.9 105.5zM441.5 136.8L442.6 130.2L438.8 135.7zM406.1 134.3L409.9 129.1L403.7 131.0zM405.9 133.9L411.0 127.8L403.9 131.3zM423.3 117.6L419.1 122.6L425.4 120.9zM358.7 121.3L358.2 127.7L361.2 122.0zM346.6 151.2L351.1 145.1L344.1 148.0zM366.9 125.2L374.5 132.6L370.0 123.0zM390.2 129.8L383.0 132.0L390.4 133.0zM372.6 131.8L371.2 141.0L376.4 133.4zM371.1 145.3L373.2 135.9L368.3 144.2zM374.8 134.1L381.8 131.2L374.2 131.1zM390.1 128.3L380.7 131.4L390.6 130.9zM346.2 151.5L353.7 145.9L344.5 147.8zM369.7 142.7L363.5 144.8L369.7 146.8zM368.4 145.5L373.8 152.0L371.0 144.0zM389.7 159.8L380.6 159.3L388.5 163.8zM404.9 138.9L401.5 145.5L407.4 140.9zM390.4 162.8L392.8 156.9L387.8 160.8zM389.4 163.8L396.0 160.9L388.9 159.7zM409.8 158.6L400.1 160.6L409.8 162.5zM411.5 161.5L414.6 152.1L408.1 159.6zM408.5 161.8L415.2 166.0L411.0 159.3zM387.7 161.2L386.0 169.0L390.5 162.4zM390.8 180.1L386.7 176.4L387.4 181.9zM343.9 149.4L344.2 156.9L346.8 149.9zM346.7 181.7L347.8 176.4L344.0 180.3zM351.9 169.1L359.8 165.1L351.0 166.6zM332.3 165.7L338.1 163.0L331.7 162.7zM337.7 161.0L332.0 164.2L338.5 165.0zM330.7 128.6L335.6 133.1L333.3 126.9zM338.0 134.3L332.1 128.0L335.7 135.8zM441.7 137.3L444.7 129.4L438.6 135.2zM445.8 150.9L451.1 146.0L444.2 148.3zM444.5 147.9L436.5 152.1L445.5 151.3zM443.5 150.8L451.1 156.9L446.5 148.4zM455.3 181.4L455.0 174.5L451.7 180.6zM456.6 166.0L462.9 161.6L455.2 162.4zM438.7 135.2L436.5 141.1L441.5 137.3zM439.2 137.9L446.1 139.9L441.1 134.6zM441.0 135.1L435.3 132.6L439.2 137.5zM421.8 175.3L432.3 174.9L422.0 172.5zM453.8 174.6L447.4 175.1L453.2 178.1zM205.1 183.9L216.2 184.1L205.6 180.7zM250.5 170.6L246.7 175.6L252.6 173.4zM214.7 183.1L211.4 191.4L217.9 185.2zM206.0 184.3L211.6 180.5L204.8 180.3zM219.5 176.5L210.3 180.9L220.4 179.7zM238.7 181.8L243.0 187.8L242.5 180.4zM264.9 194.4L257.4 195.7L264.9 197.0zM266.2 196.3L267.3 190.2L263.6 195.1zM276.3 171.2L275.8 178.1L280.2 172.8zM263.0 196.4L267.3 202.4L266.8 195.0zM293.0 219.2L289.2 218.2L290.2 222.0zM270.2 205.9L264.9 210.9L271.8 208.5zM233.7 233.6L239.7 230.3L232.9 229.5zM233.9 229.9L224.7 228.7L232.7 233.2zM255.1 194.2L247.4 196.2L255.3 197.2zM235.8 199.4L232.1 193.9L233.2 200.5zM237.1 231.0L239.8 222.3L234.4 229.6zM231.5 231.3L232.3 238.5L235.1 231.8zM239.3 257.6L234.4 251.6L237.0 258.9zM231.3 238.4L225.8 242.9L232.8 241.7zM236.8 259.0L241.7 264.4L239.5 257.5zM238.6 260.2L246.7 256.6L237.8 256.4zM292.8 254.5L286.3 255.8L292.8 257.2zM253.7 226.2L258.8 232.8L256.6 224.7zM297.3 228.6L292.8 231.5L298.1 232.1zM262.4 239.5L261.3 246.1L265.0 240.6zM262.9 252.2L261.3 246.1L259.6 252.2zM274.3 240.0L275.8 247.3L277.4 240.0zM274.8 254.0L275.8 247.3L272.0 252.8zM268.3 255.1L266.1 263.1L271.2 256.5zM289.7 221.1L292.8 225.5L293.6 220.1zM292.6 221.9L297.2 216.4L290.7 219.3zM295.9 184.7L299.6 190.9L299.5 183.6zM302.6 212.4L303.6 201.8L300.1 211.8zM277.4 173.4L284.3 175.6L279.1 170.6zM317.6 170.5L313.5 174.4L319.1 173.5zM304.4 202.7L310.2 198.8L303.2 199.6zM343.8 187.7L335.4 190.4L344.2 190.3zM344.7 214.1L335.4 212.1L343.3 217.4zM336.6 212.7L339.1 203.8L334.1 211.5zM342.5 190.9L340.9 199.4L345.5 192.0zM300.0 232.4L299.6 239.9L302.7 233.1zM294.4 256.6L295.3 251.0L291.3 255.1zM308.0 232.8L315.9 235.2L309.3 230.3zM327.4 258.6L322.0 252.2L323.9 260.4zM318.2 237.4L320.8 232.8L316.1 235.4zM325.1 257.5L315.2 262.6L326.2 261.4zM302.4 272.6L307.4 276.5L305.1 270.6zM324.2 260.9L331.3 265.1L327.1 258.0zM338.0 269.0L331.7 265.6L335.2 271.8zM342.3 236.6L340.3 243.3L345.7 238.7zM334.7 257.9L336.1 250.7L331.2 256.2zM347.5 171.4L345.4 180.5L350.5 172.6zM332.8 194.5L338.4 189.9L331.2 190.9zM339.2 189.7L344.1 196.2L341.8 188.4zM366.5 191.7L366.0 184.2L363.1 191.2zM385.4 171.4L384.2 176.9L387.9 172.6zM383.2 178.4L392.8 182.9L385.3 175.3zM402.5 198.4L400.0 193.9L400.0 199.1zM399.8 190.7L404.2 185.9L397.9 187.4zM420.9 172.7L416.3 177.8L422.9 176.1zM400.8 200.5L409.7 200.9L401.7 197.0zM434.9 195.8L427.9 199.1L435.7 199.3zM399.7 198.3L399.1 207.4L402.8 199.1zM436.7 196.7L430.7 189.4L433.9 198.3zM436.1 199.0L442.4 193.5L434.5 196.1zM456.1 171.3L454.7 175.6L458.2 172.7zM434.9 199.2L442.3 198.9L435.6 195.9zM433.5 199.3L431.8 209.2L437.1 200.6zM402.3 236.5L406.6 230.9L400.2 233.9zM421.2 224.6L427.9 225.7L422.6 221.5zM459.3 225.3L451.6 228.3L459.9 228.1zM331.4 213.3L339.3 215.8L332.6 210.9zM370.0 217.7L370.9 212.1L366.9 216.2zM372.7 217.2L375.4 223.3L376.3 216.7zM401.5 233.3L392.8 234.0L401.0 237.0zM400.3 233.8L396.2 238.8L402.3 236.6zM400.3 236.6L407.7 239.8L402.2 233.8zM425.6 248.1L419.5 246.1L423.1 251.4zM423.7 247.0L425.6 238.8L420.1 245.2zM424.7 251.6L434.2 247.8L424.0 247.9zM423.0 250.4L428.0 257.1L425.6 249.1zM419.0 244.5L409.2 249.2L420.0 247.7zM398.6 254.8L404.9 258.2L401.5 252.0zM361.9 257.2L361.0 246.5L358.0 256.9zM368.8 260.6L361.0 259.8L368.1 263.2zM358.1 258.9L358.0 266.0L361.8 260.0zM367.0 263.3L373.7 267.1L369.9 260.5zM369.6 263.5L373.9 258.0L367.3 260.3zM333.5 256.7L336.9 247.3L330.5 255.0zM330.7 266.3L335.6 271.6L333.3 264.8zM337.1 270.8L332.0 265.6L334.2 272.5zM330.8 190.8L334.8 196.5L333.2 189.7z"/></g></g></svg></div>
<svg class="abs" style="left:248px;top:148px" width="745" height="745" viewBox="0 0 745 745" shape-rendering="crispEdges"><rect x=".5" y=".5" width="744" height="744" fill="none" stroke="#000" stroke-width="1"/><path d="M0 .5H745M0 744.500H745M.5 0V745M744.500 0V745" fill="none" stroke="#f0e850" stroke-width="1" stroke-dasharray="4 4"/></svg>
<svg class="abs" style="left:1031px;top:122px" width="12" height="12" viewBox="0 0 12 12"><rect width="12" height="12" fill="#b4b4b4"/><circle cx="5" cy="5" r="3" fill="#888" stroke="#555" stroke-width="1.300"/><path d="M7.300 7.300L11 11" stroke="#555" stroke-width="1.800"/></svg>
<div class="abs" style="left:1029px;top:138px;width:15px;height:767px;background:#5e5e5e;border:1px solid #222;border-radius:2px"></div>
<div class="abs" style="left:214px;top:906px;width:818px;height:15px;background:#5e5e5e;border:1px solid #222;border-radius:2px"></div>
<div class="abs" style="left:198px;top:908px;width:11px;height:11px;background:#666;border:1px dotted #aaa"></div>
<svg class="abs" style="left:1033px;top:907px" width="13" height="13" viewBox="0 0 14 14"><path d="M7 0l6.500 14L7 10.500.500 14z" fill="#c8c8c8"/></svg>
<div class="abs" style="left:279px;top:924px;width:47px;height:29px;background:#2b2b2b;border:1px solid #1c1c1c;border-radius:4px"></div>
<div class="txt" style="left:286px;top:933px;font-size:11px;color:#e0e0e0">px</div>
<svg class="abs" style="left:305px;top:933px" width="14" height="9" viewBox="0 0 14 9"><path d="M1 1.500l6 6 6-6" fill="none" stroke="#e8e8e8" stroke-width="1.700"/></svg>
<div class="abs" style="left:326px;top:924px;width:31px;height:29px;background:#2b2b2b;border:1px solid #1c1c1c;border-radius:4px 0 0 4px"></div>
<div class="abs" style="left:329px;top:933px;width:25px;height:13px;background:#27313d;overflow:hidden"><span style="font-size:9.500px;color:#dcdcdc;white-space:nowrap;position:absolute;left:0;top:1px;letter-spacing:-.2px">18,2 %</span></div>
<div class="abs" style="left:356px;top:924px;width:18px;height:29px;background:#2b2b2b;border:1px solid #1c1c1c;border-radius:4px"></div>
<svg class="abs" style="left:359px;top:933px" width="12" height="9" viewBox="0 0 12 9"><path d="M1 1.500l5 5.500 5-5.500" fill="none" stroke="#e8e8e8" stroke-width="1.700"/></svg>
<div class="txt" style="left:377px;top:932px;font-size:12px;letter-spacing:-.12px;color:#e8e8e8" id="status">Hintergrund (357,7 MB)</div>
</div>
<div id="rightdock">
<!-- top tabs -->
<svg class="abs" style="left:1054px;top:65px" width="8" height="13" viewBox="0 0 8 13"><path d="M6.800 1L1.500 6.500 6.800 12" fill="none" stroke="#e8e8e8" stroke-width="1.700"/></svg>
<div class="abs" style="left:1067px;top:63px;width:118px;height:21px;background:#2b2b2b"></div>
<div class="abs" style="left:1091px;top:63px;width:1px;height:21px;background:#242424"></div>
<div class="abs" style="left:1115px;top:63px;width:1px;height:21px;background:#242424"></div>
<div class="abs" style="left:1139px;top:63px;width:1px;height:21px;background:#242424"></div>
<div class="abs" style="left:1163px;top:63px;width:1px;height:21px;background:#242424"></div>
<div class="abs" style="left:1071px;top:65px;width:15px;height:15px;background:radial-gradient(circle at 50% 50%,#000 0,#222 10%,#888 32%,#fff 62%);border:1px solid #111"></div>
<svg class="abs" style="left:1095px;top:65px" width="15" height="15" viewBox="0 0 15 15"><defs><pattern id="gck" width="6" height="6" patternUnits="userSpaceOnUse"><rect width="6" height="6" fill="#9a9a9a"/><rect width="3" height="3" fill="#666"/><rect x="3" y="3" width="3" height="3" fill="#666"/></pattern><linearGradient id="ggr" x1="0" x2="1" y1="0" y2="0"><stop offset="0" stop-color="#f4cc62"/><stop offset=".35" stop-color="#f0c864"/><stop offset="1" stop-color="#e8c060" stop-opacity=".15"/></linearGradient></defs><rect width="15" height="15" fill="#111"/><rect x="1" y="1" width="13" height="13" fill="url(#gck)"/><rect x="1" y="1" width="13" height="13" fill="url(#ggr)"/></svg>
<svg class="abs" style="left:1121px;top:66px" width="13" height="14" viewBox="0 0 16 16"><path d="M15 .3c.3 0 .5.300.3.600L8.800 10.800 6.300 9.300 14.300.600c.2-.2.400-.3.700-.3z" fill="#c8c8c8"/><path d="M5.700 10.100l2.400 1.500c-.4 1.800-1.800 3.400-4.200 3.600-1.200.1-2.300-.2-3.400-.5 1.800-.5 2.800-1.200 3.300-2.500.3-.900 1-1.700 1.900-2.100z" fill="#c8c8c8"/></svg>
<div class="abs" style="left:1143px;top:65px;width:15px;height:15px;background:#333;border:1px solid #0a0a0a"></div>
<svg class="abs" style="left:1146px;top:67px" width="10" height="12" viewBox="0 0 10 12"><path d="M1 .5L8.500 7H5.300l1.900 3.800-1.500.7L3.800 7.700 1 10z" fill="#e0e0e0"/></svg>
<svg class="abs" style="left:1167px;top:65px" width="15" height="15" viewBox="0 0 15 15"><path d="M1.600 3.600h7M1.600 3.600v7.400h11.400V6.500" fill="none" stroke="#c8c8c8" stroke-width="1.200"/><path d="M12.300 1.200l1.300 1.300-6.500 6.500-2.200.9.900-2.200z" fill="#c8c8c8"/><circle cx="13.600" cy="1.400" r=".8" fill="#c8c8c8"/><path d="M3.300 11.500l-1.300 2.800M11.300 11.500l1.300 2.800" stroke="#c8c8c8" stroke-width="1.200"/></svg>
<div class="abs" style="left:1185px;top:60px;width:25px;height:25px;background:#4a4a4a;border:1px solid #5c5c5c;border-bottom:none"></div>
<svg class="abs" style="left:1190px;top:64px" width="15" height="16" viewBox="0 0 15 16"><rect x="1.700" y="3.700" width="11.600" height="7.600" fill="none" stroke="#c8c8c8" stroke-width="1.300"/><path d="M6.300 3.300l1.200-2.300 1.200 2.300z" fill="#c8c8c8"/><path d="M1.500 12.800h12" stroke="#9a9a9a" stroke-width="1.100"/><path d="M3.300 13l-.9 2.500M11.700 13l.9 2.500" stroke="#9a9a9a" stroke-width="1.200"/></svg>
<svg class="abs" style="left:1216px;top:65px" width="8" height="13" viewBox="0 0 8 13"><path d="M1.200 1l5.300 5.500L1.200 12" fill="none" stroke="#e8e8e8" stroke-width="1.700"/></svg>
<svg class="abs" style="left:1234px;top:67px" width="10" height="10" viewBox="0 0 10 10"><rect x=".5" y=".5" width="9" height="9" fill="#5a5a5a" stroke="#c8c8c8"/><path d="M7.500 2L2.500 5l5 3z" fill="#c8c8c8"/></svg>
<!-- panel -->
<div class="abs" style="left:1050px;top:84px;width:199px;height:571px;border:1px solid #585858;border-right:none"></div>
<div class="abs" style="left:1186px;top:84px;width:23px;height:1px;background:#4a4a4a"></div>
<div class="abs" style="left:1051px;top:85px;width:198px;height:569px;background:#3e3e3e"></div>
<div class="abs" style="left:1053px;top:100px;width:196px;height:528px;background:#464646"></div>
<div class="txt" style="left:1053px;top:87px;font-weight:bold;font-size:11.500px;color:#e8e8e8;letter-spacing:.65px" id="gegl">GEGL-Operation</div>
<div class="abs cb" style="left:1055px;top:103px"><svg width="13" height="13" viewBox="0 0 13 13" style="display:block"><path d="M3.800 3.800l5.400 5.400M9.200 3.800l-5.400 5.400" stroke="#fff" stroke-width="2.200"/></svg></div>
<div class="txt ui dis" style="left:1073px;top:103px" id="mw">Mittelwert bilden</div>
<div class="abs" style="left:1069px;top:121px;width:178px;height:17px;background:#2a2a2a;border:1px solid #6c6c6c"></div>
<div class="txt ui" style="left:1071px;top:124px;color:#e8e8e8;letter-spacing:.15px" id="rad">Radius</div>
<div class="txt ui" style="left:1226px;top:124px;color:#e8e8e8">3</div>
<svg class="abs" style="left:1237px;top:123px" width="8" height="13" viewBox="0 0 8 13"><path d="M1 5l3-3.500L7 5M1 8l3 3.500L7 8" fill="none" stroke="#d8d8d8" stroke-width="1.400"/></svg>
<div class="abs cb" style="left:1055px;top:145px"><svg width="13" height="13" viewBox="0 0 13 13" style="display:block"><path d="M3.800 3.800l5.400 5.400M9.200 3.800l-5.400 5.400" stroke="#fff" stroke-width="2.200"/></svg></div>
<div class="txt ui dis" style="left:1073px;top:145px" id="fk">Farbkomposition verwenden</div>
<!-- gegl buttons -->
<svg class="abs" style="left:1070px;top:634px" width="13" height="14" viewBox="0 0 13 14"><path d="M5.700 0h1.600v4.500H9.500L6.500 8 3.500 4.500h2.200z" fill="#c8c8c8"/><path d="M2.500 8h8l1 5h-10z" fill="#c8c8c8"/><path d="M4 10.500h5" stroke="#454545" stroke-width="1.200" stroke-dasharray="1 1"/></svg>
<svg class="abs" style="left:1117px;top:634px" width="14" height="14" viewBox="0 0 14 14"><path d="M4 3.500A5 5 0 1 1 3 10" fill="none" stroke="#c8c8c8" stroke-width="1.500"/><path d="M1 1l.5 5L6 4z" fill="#c8c8c8"/><path d="M1.500 1.500l4 4" stroke="#c8c8c8" stroke-width="1" stroke-dasharray="1 1"/></svg>
<svg class="abs" style="left:1165px;top:634px" width="14" height="14" viewBox="0 0 14 14"><defs><pattern id="ck2" width="2" height="2" patternUnits="userSpaceOnUse"><rect width="2" height="2" fill="#8a8a8a"/><rect width="1" height="1" fill="#e0e0e0"/><rect x="1" y="1" width="1" height="1" fill="#e0e0e0"/></pattern></defs><rect x=".5" y=".5" width="13" height="13" fill="url(#ck2)"/><path d="M3 3l8 8M11 3l-8 8" stroke="#3a3a3a" stroke-width="2.200"/></svg>
<svg class="abs" style="left:1214px;top:634px" width="14" height="14" viewBox="0 0 14 14"><path d="M3 6A4.800 4.800 0 1 1 8 11.800" fill="none" stroke="#c8c8c8" stroke-width="1.500"/><path d="M.5 4.500L6 5 3 8.500z" fill="#c8c8c8"/><circle cx="4.500" cy="11.800" r="1.700" fill="#c8c8c8"/></svg>
<!-- handle -->
<div class="abs" style="left:1051px;top:655px;width:198px;height:27px;background:#414141"></div>
<div class="abs" style="left:1141px;top:655px;width:18px;height:2px;background-image:repeating-linear-gradient(90deg,#b8b8b8 0 4px,transparent 4px 7px)"></div>
<!-- layers tab -->
<div class="abs" style="left:1051px;top:658px;width:64px;height:24px;background:#4a4a4a;border:1px solid #5c5c5c;border-bottom:none"></div>
<svg class="abs" style="left:1053px;top:663px" width="14" height="14" viewBox="0 0 14 14"><path d="M3 .5h10.500L11 3H.5zM3 5.500h10.500L11 8H.5zM3 10.500h10.500L11 13H.5z" fill="#d0d0d0"/></svg>
<div class="txt ui" style="left:1068px;top:664px;color:#e8e8e8;letter-spacing:0.4px" id="eb">Ebenen</div>
<svg class="abs" style="left:1234px;top:665px" width="10" height="10" viewBox="0 0 10 10"><rect x=".5" y=".5" width="9" height="9" fill="#5a5a5a" stroke="#c8c8c8"/><path d="M7.500 2L2.500 5l5 3z" fill="#c8c8c8"/></svg>
<div class="abs" style="left:1115px;top:681px;width:134px;height:1px;background:#585858"></div>
<div class="abs" style="left:1051px;top:682px;width:198px;height:272px;background:#3c3c3c"></div>
<!-- mode -->
<div class="abs" style="left:1053px;top:684px;width:150px;height:28px;background:#2b2b2b;border:1px solid #1c1c1c;border-radius:4px"></div>
<div class="txt ui" style="left:1060px;top:692px;color:#e0e0e0;letter-spacing:0.5px" id="mo">Modus</div>
<div class="txt ui" style="left:1137px;top:692px;color:#e0e0e0;letter-spacing:0.4px" id="no">Normal</div>
<svg class="abs" style="left:1183px;top:693px" width="14" height="9" viewBox="0 0 14 9"><path d="M1 1.500l6 6 6-6" fill="none" stroke="#e8e8e8" stroke-width="1.700"/></svg>
<div class="abs" style="left:1204px;top:684px;width:43px;height:28px;background:#2b2b2b;border:1px solid #1c1c1c;border-radius:4px"></div>
<svg class="abs" style="left:1209px;top:691px" width="13" height="14" viewBox="0 0 14 14"><path d="M3 6A4.800 4.800 0 1 1 8 11.800" fill="none" stroke="#c8c8c8" stroke-width="1.500"/><path d="M.5 4.500L6 5 3 8.500z" fill="#c8c8c8"/><circle cx="4.500" cy="11.800" r="1.700" fill="#c8c8c8"/></svg>
<svg class="abs" style="left:1227px;top:693px" width="14" height="9" viewBox="0 0 14 9"><path d="M1 1.500l6 6 6-6" fill="none" stroke="#e8e8e8" stroke-width="1.700"/></svg>
<!-- opacity -->
<div class="abs" style="left:1053px;top:713px;width:194px;height:17px;background:#5c5c5c;border:1px solid #7c7c7c"></div>
<div class="abs" style="left:1234px;top:714px;width:12px;height:15px;background:#262626"></div>
<div class="txt ui" style="left:1055px;top:716px;color:#f0f0f0" id="dk">Deckkraft</div>
<div class="txt ui" style="left:1201px;top:716px;color:#f0f0f0;letter-spacing:0.45px" id="hu">100,0</div>
<svg class="abs" style="left:1236px;top:715px" width="8" height="13" viewBox="0 0 8 13"><path d="M1 5l3-3.500L7 5" fill="none" stroke="#666" stroke-width="1.400"/><path d="M1 8l3 3.500L7 8" fill="none" stroke="#d8d8d8" stroke-width="1.400"/></svg>
<!-- lock -->
<div class="txt ui" style="left:1053px;top:736px;color:#e8e8e8;letter-spacing:0.25px" id="sp">Sperre:</div>
<svg class="abs" style="left:1099px;top:736px" width="13" height="13" viewBox="0 0 16 16"><path d="M15 .3c.3 0 .5.300.3.600L8.800 10.800 6.300 9.300 14.300.600c.2-.2.400-.3.700-.3z" fill="#c8c8c8"/><path d="M5.700 10.100l2.400 1.500c-.4 1.800-1.800 3.400-4.200 3.600-1.200.1-2.300-.2-3.400-.5 1.800-.5 2.800-1.200 3.300-2.500.3-.900 1-1.700 1.900-2.100z" fill="#c8c8c8"/></svg>
<svg class="abs" style="left:1123px;top:736px" width="13" height="13" viewBox="0 0 16 16"><path d="M8 .3l2.600 3.200H8.800v3.700h3.700V5.400L15.700 8l-3.200 2.600V8.800H8.800v3.700h1.800L8 15.700l-2.600-3.200h1.800V8.800H3.500v1.800L.3 8l3.200-2.600v1.800h3.700V3.500H5.400z" fill="#c8c8c8"/></svg>
<svg class="abs" style="left:1147px;top:736px" width="13" height="13" viewBox="0 0 13 13"><defs><pattern id="ck3" width="6.500" height="6.500" patternUnits="userSpaceOnUse"><rect width="6.500" height="6.500" fill="#7c7c7c"/><rect width="3.250" height="3.250" fill="#c4c4c4"/><rect x="3.250" y="3.250" width="3.250" height="3.250" fill="#c4c4c4"/></pattern></defs><rect width="13" height="13" fill="url(#ck3)"/></svg>
<!-- layer list -->
<div class="abs" style="left:1054px;top:755px;width:192px;height:174px;background:#323232"></div>
<div class="abs" style="left:1054px;top:755px;width:192px;height:23px;background:#4a4a4a;border:1px solid #3a3a3a"></div>
<div class="abs" style="left:1081px;top:756px;width:1px;height:21px;background:#3a3a3a"></div>
<div class="abs" style="left:1109px;top:756px;width:1px;height:21px;background:#3a3a3a"></div>
<svg class="abs" style="left:1060px;top:761px" width="15" height="11" viewBox="0 0 15 11"><path d="M1 5.500C3 2.500 5 1.200 7.500 1.200S12 2.500 14 5.500C12 8.500 10 9.800 7.500 9.800S3 8.500 1 5.500z" fill="none" stroke="#b8b8b8" stroke-width="1.200"/><circle cx="7.500" cy="5.500" r="2.200" fill="#b8b8b8"/></svg>
<svg class="abs" style="left:1091px;top:759px" width="9" height="15" viewBox="0 0 9 15"><rect x="2" y="1" width="5" height="5" rx="1" fill="none" stroke="#c8c8c8" stroke-width="1.500"/><path d="M4.500 5v4" stroke="#c8c8c8" stroke-width="1.500"/><path d="M1.500 14V10.500c0-1 .5-1.500 1.500-1.500h3c1 0 1.500.5 1.500 1.500V14" fill="none" stroke="#c8c8c8" stroke-width="1.500"/></svg>
<div class="abs" style="left:1054px;top:778px;width:192px;height:40px;background:#222"></div>
<svg class="abs" style="left:1058px;top:791px" width="20" height="15" viewBox="0 0 20 15"><path d="M1 7.500C4 3 7 1.500 10 1.500S16 3 19 7.500C16 12 13 13.500 10 13.500S4 12 1 7.500z" fill="none" stroke="#e0e0e0" stroke-width="1.500"/><circle cx="10" cy="7.500" r="3.300" fill="#e0e0e0"/><circle cx="9" cy="6.500" r="1.100" fill="#222"/></svg>
<div class="abs" style="left:1129px;top:780px;width:36px;height:36px;background:#000;border:1px solid #fff;outline:1px solid #fff;outline-offset:-2px"></div>
<div class="abs" style="left:1141px;top:786px;width:9px;height:6px;border-radius:50%;background:#2a0303"></div>
<div class="txt ui" style="left:1169px;top:792px;color:#f0f0f0;letter-spacing:0.5px" id="hg">Hintergrund</div>
<!-- layer buttons -->
<svg class="abs" style="left:1058px;top:934px" width="12" height="13" viewBox="0 0 12 13"><path d="M3.500 3.500h7.500v9h-7.500z" fill="none" stroke="#c8c8c8" stroke-width="1.300"/><path d="M3 0v5M.5 2.500h5" stroke="#c8c8c8" stroke-width="1.300"/></svg>
<svg class="abs" style="left:1081px;top:934px" width="14" height="13" viewBox="0 0 14 13"><path d="M.5 1.500h5l1 1.500h7v9.500h-13z" fill="#c8c8c8"/><path d="M9 5.500v5M6.500 8h5" stroke="#454545" stroke-width="1.400"/></svg>
<svg class="abs" style="left:1105px;top:936px" width="14" height="9" viewBox="0 0 14 9"><path d="M1 7.500l6-6 6 6" fill="none" stroke="#e0e0e0" stroke-width="1.700"/></svg>
<svg class="abs" style="left:1129px;top:936px" width="14" height="9" viewBox="0 0 14 9"><path d="M1 1.500l6 6 6-6" fill="none" stroke="#e0e0e0" stroke-width="1.700"/></svg>
<svg class="abs" style="left:1154px;top:934px" width="13" height="13" viewBox="0 0 13 13"><rect x="1" y="1" width="7" height="6" fill="none" stroke="#9a9a9a" stroke-width="1.200"/><rect x="5" y="5.500" width="7" height="6" fill="#454545" stroke="#9a9a9a" stroke-width="1.200"/></svg>
<svg class="abs" style="left:1177px;top:934px" width="15" height="13" viewBox="0 0 15 13"><path d="M2 1h6.500L7 3.500H.5zM2 5h6.500L7 7.500H.5zM2 9h6.500L7 11.500H.5z" fill="#c8c8c8"/><path d="M12 1.500v7" stroke="#c8c8c8" stroke-width="1.500"/><path d="M9.500 8h5L12 12z" fill="#c8c8c8"/></svg>
<svg class="abs" style="left:1201px;top:933px" width="15" height="14" viewBox="0 0 15 14"><path d="M2.500.5h7v5c0 1.500-1.500 3-3.500 3s-3.500-1.500-3.500-3z" fill="#c8c8c8"/><path d="M3.500 2.500l2 .8M8.500 2.500l-2 .8" stroke="#454545" stroke-width=".9"/><path d="M4.500 5.200h3L6 6.800z" fill="#454545"/><path d="M4.500 8.500h10l-3 5H.5z" fill="#c8c8c8"/></svg>
<svg class="abs" style="left:1227px;top:934px" width="13" height="13" viewBox="0 0 13 13"><rect width="13" height="13" rx="1.500" fill="#d0d0d0"/><path d="M3 3l7 7M10 3l-7 7" stroke="#383838" stroke-width="2"/></svg>
</div>
<!-- BORDERS -->
<div id="bl"></div><div id="br"></div><div id="bb"></div>
</div>
</body>
</html>
